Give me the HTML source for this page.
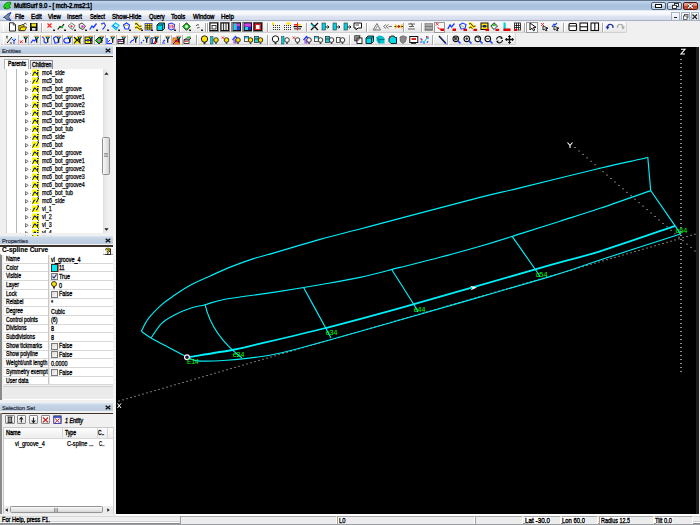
<!DOCTYPE html>
<html><head><meta charset="utf-8">
<style>
*{margin:0;padding:0;box-sizing:border-box}
html,body{width:700px;height:525px;overflow:hidden;background:#f0f0f0;font-family:"Liberation Sans",sans-serif;position:relative}
.a{position:absolute}
svg.a{overflow:visible}
.tx{position:absolute;white-space:pre;line-height:1;transform-origin:0 0;display:inline-block;-webkit-text-stroke:0.25px currentColor}
</style></head><body>
<div class="a" style="left:0.00px;top:0.00px;width:700.00px;height:11.00px;background:linear-gradient(#c2d6ec,#a9c1de 45%,#b2c8e3);border-top:1px solid #62758c"></div>
<div class="a" style="left:0.00px;top:10.00px;width:700.00px;height:1.00px;background:#dfe8f3"></div>
<svg class="a" style="left:2.00px;top:0.50px" width="10" height="9" viewBox="0 0 10 9"><path d="M1.5 6 L3 3 L5 1.5 L8.5 1 L9 3 L7 4.5 L8.5 6.5 L5 8 L3 7.5 Z" fill="#1ed21e" stroke="#0c6a0c" stroke-width="0.7"/><path d="M2 8 L4 6" stroke="#0c6a0c" stroke-width="0.8"/></svg>
<span class="tx" style="left:13.60px;top:2.22px;font-size:7.30px;transform:scaleX(0.813);color:#000;font-weight:normal;font-style:normal;-webkit-text-stroke:0.45px #000">MultiSurf 9.0 - [ mch-2.ms2:1]</span>
<div class="a" style="left:651.00px;top:1.50px;width:15.00px;height:8.00px;border:1px solid #4e5e72;border-radius:2px;background:linear-gradient(#eef4fa,#d4e0ee 45%,#b4c6dc 55%,#c4d4e8)"></div>
<div class="a" style="left:655.00px;top:4.20px;width:7.00px;height:3.40px;background:#fff;border:1px solid #111"></div>
<div class="a" style="left:667.00px;top:1.50px;width:15.00px;height:8.00px;border:1px solid #4e5e72;border-radius:2px;background:linear-gradient(#eef4fa,#d4e0ee 45%,#b4c6dc 55%,#c4d4e8)"></div>
<svg class="a" style="left:671.50px;top:2.50px" width="7" height="6" viewBox="0 0 7 6"><rect x="2.5" y="0.5" width="4" height="3" fill="#fff" stroke="#222" stroke-width="0.9"/><rect x="0.5" y="2.3" width="4" height="3.2" fill="#fff" stroke="#222" stroke-width="0.9"/></svg>
<div class="a" style="left:683.00px;top:1.50px;width:15.00px;height:8.00px;border:1px solid #4a1a12;border-radius:2px;background:linear-gradient(#f4b0a0,#e8806a 45%,#c83a20 55%,#d85030)"></div>
<svg class="a" style="left:687.00px;top:2.50px" width="7" height="6" viewBox="0 0 7 6"><path d="M1 0.8 L6 5.2 M6 0.8 L1 5.2" stroke="#222" stroke-width="2.2"/><path d="M1 0.8 L6 5.2 M6 0.8 L1 5.2" stroke="#fff" stroke-width="1.2"/></svg>
<div class="a" style="left:0.00px;top:11.00px;width:700.00px;height:10.00px;background:linear-gradient(#fbfcfe,#f2f5fa 35%,#dde3f0 55%,#d3daeb 92%)"></div>
<div class="a" style="left:0.00px;top:20.20px;width:700.00px;height:0.90px;background:#a8b1c2"></div>
<svg class="a" style="left:3.00px;top:11.50px" width="9" height="9" viewBox="0 0 9 9"><path d="M8 0.5 L4 2.5 L1.5 5 L0.5 5.5 L1.5 5.5 L4 7.5 L8 8.5 L5.5 5 Z" fill="#2ad42a" stroke="#2020c0" stroke-width="0.9"/><circle cx="4.8" cy="4" r="0.9" fill="#e040e0"/><circle cx="4.8" cy="6" r="0.9" fill="#e040e0"/></svg>
<span class="tx" style="left:15.00px;top:12.62px;font-size:7.30px;transform:scaleX(0.790);color:#000;font-weight:normal;font-style:normal;-webkit-text-stroke:0.4px #000">File</span>
<span class="tx" style="left:30.70px;top:12.62px;font-size:7.30px;transform:scaleX(0.851);color:#000;font-weight:normal;font-style:normal;-webkit-text-stroke:0.4px #000">Edit</span>
<span class="tx" style="left:47.90px;top:12.62px;font-size:7.30px;transform:scaleX(0.816);color:#000;font-weight:normal;font-style:normal;-webkit-text-stroke:0.4px #000">View</span>
<span class="tx" style="left:67.00px;top:12.62px;font-size:7.30px;transform:scaleX(0.822);color:#000;font-weight:normal;font-style:normal;-webkit-text-stroke:0.4px #000">Insert</span>
<span class="tx" style="left:90.00px;top:12.62px;font-size:7.30px;transform:scaleX(0.740);color:#000;font-weight:normal;font-style:normal;-webkit-text-stroke:0.4px #000">Select</span>
<span class="tx" style="left:112.00px;top:12.62px;font-size:7.30px;transform:scaleX(0.823);color:#000;font-weight:normal;font-style:normal;-webkit-text-stroke:0.4px #000">Show-Hide</span>
<span class="tx" style="left:148.60px;top:12.62px;font-size:7.30px;transform:scaleX(0.790);color:#000;font-weight:normal;font-style:normal;-webkit-text-stroke:0.4px #000">Query</span>
<span class="tx" style="left:171.40px;top:12.62px;font-size:7.30px;transform:scaleX(0.839);color:#000;font-weight:normal;font-style:normal;-webkit-text-stroke:0.4px #000">Tools</span>
<span class="tx" style="left:192.90px;top:12.62px;font-size:7.30px;transform:scaleX(0.825);color:#000;font-weight:normal;font-style:normal;-webkit-text-stroke:0.4px #000">Window</span>
<span class="tx" style="left:221.40px;top:12.62px;font-size:7.30px;transform:scaleX(0.859);color:#000;font-weight:normal;font-style:normal;-webkit-text-stroke:0.4px #000">Help</span>
<div class="a" style="left:671.30px;top:12.00px;width:8.50px;height:8.50px;border:1px solid #a7b4c4;background:linear-gradient(#fafbfd,#e2e8f1)"></div>
<div class="a" style="left:681.00px;top:12.00px;width:8.50px;height:8.50px;border:1px solid #a7b4c4;background:linear-gradient(#fafbfd,#e2e8f1)"></div>
<div class="a" style="left:690.60px;top:12.00px;width:8.50px;height:8.50px;border:1px solid #a7b4c4;background:linear-gradient(#fafbfd,#e2e8f1)"></div>
<div class="a" style="left:673.80px;top:17.00px;width:3.50px;height:1.30px;background:#222"></div>
<svg class="a" style="left:682.50px;top:13.50px" width="6" height="6" viewBox="0 0 6 6"><rect x="1.5" y="0.5" width="3.5" height="3" fill="none" stroke="#444" stroke-width="0.8"/><rect x="0.5" y="2" width="3.5" height="3.5" fill="#fff" stroke="#444" stroke-width="0.8"/></svg>
<svg class="a" style="left:692.30px;top:13.50px" width="6" height="6" viewBox="0 0 6 6"><path d="M0.5 0.5 L5 5 M5 0.5 L0.5 5" stroke="#222" stroke-width="1.2"/></svg>
<div class="a" style="left:0.00px;top:21.30px;width:700.00px;height:24.70px;background:#f0f0f0"></div>
<div class="a" style="left:1.00px;top:21.50px;width:626.00px;height:11.50px;background:linear-gradient(#fbfbfb,#f1f1f1 60%,#e6e6e6);border-right:1px solid #d6d6d6;border-bottom:1px solid #d0d0d0;border-radius:0 2px 2px 0"></div>
<div class="a" style="left:1.00px;top:33.30px;width:515.00px;height:12.20px;background:linear-gradient(#fbfbfb,#f1f1f1 60%,#e6e6e6);border-right:1px solid #d6d6d6;border-bottom:1px solid #d0d0d0;border-radius:0 2px 2px 0"></div>
<div class="a" style="left:2.50px;top:23.00px;width:1.00px;height:9.00px;background:#a0a0a0;border-right:1px solid #fff"></div>
<div class="a" style="left:2.50px;top:35.00px;width:1.00px;height:9.50px;background:#a0a0a0;border-right:1px solid #fff"></div>
<svg class="a" style="left:7.70px;top:22.30px" width="10" height="10" viewBox="0 0 10 10"><path d="M1.5 0.8 H5.5 L7.5 2.8 V9 H1.5 Z" fill="#fff" stroke="#111" stroke-width="0.9"/><path d="M5.3 0.8 V3 H7.5" fill="none" stroke="#111" stroke-width="0.7"/></svg>
<svg class="a" style="left:18.00px;top:22.30px" width="10" height="10" viewBox="0 0 10 10"><path d="M0.8 3.5 H3 L3.8 2.6 H6 V8.6 H0.8 Z" fill="#e8c800" stroke="#222" stroke-width="0.8"/><path d="M1.5 8.6 L3 5 H8.6 L7 8.6 Z" fill="#ffe600" stroke="#222" stroke-width="0.8"/><path d="M6 1.5 Q8 0.5 8.5 2.5" fill="none" stroke="#222" stroke-width="0.8"/></svg>
<svg class="a" style="left:29.00px;top:22.30px" width="10" height="10" viewBox="0 0 10 10"><rect x="1" y="1" width="7.5" height="8" fill="#111"/><rect x="2.5" y="1.5" width="4.5" height="3" fill="#f0e020"/><rect x="3" y="6" width="3.5" height="2.5" fill="#ddd"/></svg>
<div class="a" style="left:41.00px;top:23.00px;width:0.80px;height:9.00px;background:#a8a8a8;box-shadow:1px 0 0 #fff"></div>
<svg class="a" style="left:46.30px;top:22.30px" width="10" height="10" viewBox="0 0 10 10"><path d="M1.5 1.5 L5.5 5.5 M5.5 1.5 L1.5 5.5" stroke="#ff1a1a" stroke-width="1.1"/><path d="M7.2 7.4 L8.8 8.2 L7.8 9 Z" fill="#000"/><rect x="7.3" y="7.6" width="1.6" height="1.4" fill="#000"/></svg>
<svg class="a" style="left:56.60px;top:22.30px" width="10" height="10" viewBox="0 0 10 10"><path d="M0.8 7.5 L3 4.5 L4.5 5.5 L7 2" fill="none" stroke="#111" stroke-width="1.2"/><circle cx="5" cy="5" r="1.2" fill="#10c010"/><path d="M7.2 7.4 L8.8 8.2 L7.8 9 Z" fill="#000"/><rect x="7.3" y="7.6" width="1.6" height="1.4" fill="#000"/></svg>
<svg class="a" style="left:67.00px;top:22.30px" width="10" height="10" viewBox="0 0 10 10"><path d="M1 4 L4.5 1 L8 3.5 L5.5 7.5 Z" fill="#eef8f8" stroke="#555" stroke-width="0.8"/><circle cx="4.5" cy="4.3" r="1.1" fill="#ff2020"/><path d="M2 5 L4 7" stroke="#0cc" stroke-width="0.6"/><path d="M7.2 7.4 L8.8 8.2 L7.8 9 Z" fill="#000"/><rect x="7.3" y="7.6" width="1.6" height="1.4" fill="#000"/></svg>
<svg class="a" style="left:78.00px;top:22.30px" width="10" height="10" viewBox="0 0 10 10"><path d="M1 2.5 L4 1 L7.5 4 L5 7.5 L1.5 6 Z" fill="#f4f4f4" stroke="#333" stroke-width="0.9"/><circle cx="4.5" cy="4.5" r="1.2" fill="#e020e0"/><circle cx="3" cy="6" r="0.8" fill="#20c020"/><path d="M7.2 7.4 L8.8 8.2 L7.8 9 Z" fill="#000"/><rect x="7.3" y="7.6" width="1.6" height="1.4" fill="#000"/></svg>
<svg class="a" style="left:89.20px;top:22.30px" width="10" height="10" viewBox="0 0 10 10"><path d="M0.8 7.5 L3 4 L4.5 5.5 L7.5 1.5" fill="none" stroke="#1a3aff" stroke-width="1.3"/><path d="M7.2 7.4 L8.8 8.2 L7.8 9 Z" fill="#000"/><rect x="7.3" y="7.6" width="1.6" height="1.4" fill="#000"/></svg>
<svg class="a" style="left:99.50px;top:22.30px" width="10" height="10" viewBox="0 0 10 10"><path d="M1 2 L4 1 L5.5 3.5 L4 6 L2.5 7.5" fill="none" stroke="#1a3aff" stroke-width="1.1"/><path d="M1 3 L3 2" stroke="#ccaa00" stroke-width="0.7"/><path d="M7.2 7.4 L8.8 8.2 L7.8 9 Z" fill="#000"/><rect x="7.3" y="7.6" width="1.6" height="1.4" fill="#000"/></svg>
<svg class="a" style="left:110.60px;top:22.30px" width="10" height="10" viewBox="0 0 10 10"><path d="M1 4 L4.5 1 L8 3.5 L5 7.5 Z" fill="#bff" stroke="#00c8f0" stroke-width="1.2"/><path d="M2 3.5 L6 6" stroke="#1a3aff" stroke-width="0.9"/><path d="M7.2 7.4 L8.8 8.2 L7.8 9 Z" fill="#000"/><rect x="7.3" y="7.6" width="1.6" height="1.4" fill="#000"/></svg>
<svg class="a" style="left:121.90px;top:22.30px" width="10" height="10" viewBox="0 0 10 10"><path d="M1.5 3 L4.5 1 L7.5 3 L6.5 7 L3 7 Z" fill="#fff" stroke="#1a3aff" stroke-width="1.2"/><path d="M3 3.5 L6 3.5" stroke="#ccaa00" stroke-width="0.7"/><path d="M7.2 7.4 L8.8 8.2 L7.8 9 Z" fill="#000"/><rect x="7.3" y="7.6" width="1.6" height="1.4" fill="#000"/></svg>
<svg class="a" style="left:133.90px;top:22.30px" width="10" height="10" viewBox="0 0 10 10"><path d="M1 2 Q3 0.5 4 3 Q5 5.5 7.5 4 M1 6 Q3 4 4.5 6.5 Q6 8 7.5 6.5" fill="none" stroke="#ffe800" stroke-width="2.4"/><path d="M1 2 Q3 0.5 4 3 Q5 5.5 7.5 4 M1 6 Q3 4 4.5 6.5 Q6 8 7.5 6.5" fill="none" stroke="#111" stroke-width="0.8"/><circle cx="2" cy="2" r="0.6" fill="#2030d0"/><circle cx="7" cy="6.5" r="0.6" fill="#2030d0"/><path d="M7.2 7.4 L8.8 8.2 L7.8 9 Z" fill="#000"/><rect x="7.3" y="7.6" width="1.6" height="1.4" fill="#000"/></svg>
<svg class="a" style="left:144.00px;top:22.30px" width="10" height="10" viewBox="0 0 10 10"><rect x="1" y="1.5" width="7" height="6.5" fill="#ffee00" stroke="#3a40d0" stroke-width="0.8"/><path d="M3.3 1.5 V8 M5.7 1.5 V8 M1 3.7 H8 M1 5.9 H8" stroke="#111" stroke-width="0.7"/><path d="M7.2 7.4 L8.8 8.2 L7.8 9 Z" fill="#000"/><rect x="7.3" y="7.6" width="1.6" height="1.4" fill="#000"/></svg>
<svg class="a" style="left:156.00px;top:22.30px" width="10" height="10" viewBox="0 0 10 10"><path d="M1 3 L3 1 H8.5 V6.5 L6.5 8.5 H1 Z" fill="#00d8e8" stroke="#111" stroke-width="0.9"/><path d="M1 3 H6.5 V8.5 M6.5 3 L8.5 1" fill="none" stroke="#111" stroke-width="0.8"/></svg>
<svg class="a" style="left:166.50px;top:22.30px" width="10" height="10" viewBox="0 0 10 10"><path d="M1.5 2 L4.5 1 L7.5 2.5 L7 7 L4 8 L1.5 6.5 Z" fill="#fff0f8" stroke="#3040e0" stroke-width="1.1"/><path d="M3 3 L3 6 M4.5 3 Q6 3 6 4.5 Q6 6 4.5 6" fill="none" stroke="#e02020" stroke-width="0.9"/><rect x="4.5" y="3.5" width="1.5" height="1.5" fill="#e040e0"/><path d="M7.2 7.4 L8.8 8.2 L7.8 9 Z" fill="#000"/><rect x="7.3" y="7.6" width="1.6" height="1.4" fill="#000"/></svg>
<div class="a" style="left:178.80px;top:23.00px;width:0.80px;height:9.00px;background:#a8a8a8;box-shadow:1px 0 0 #fff"></div>
<svg class="a" style="left:182.00px;top:22.30px" width="10" height="10" viewBox="0 0 10 10"><path d="M4.5 0.8 L8.3 4.5 L4.5 8.3 L0.8 4.5 Z" fill="#10d010" stroke="#111" stroke-width="0.9"/><rect x="3.3" y="3.3" width="2.4" height="2.4" fill="#fff"/><path d="M7.2 7.4 L8.8 8.2 L7.8 9 Z" fill="#000"/><rect x="7.3" y="7.6" width="1.6" height="1.4" fill="#000"/></svg>
<svg class="a" style="left:194.00px;top:22.30px" width="10" height="10" viewBox="0 0 10 10"><path d="M2 4 Q3 2 5 3" fill="none" stroke="#333" stroke-width="0.9"/><path d="M3 6 L5.5 5.5" stroke="#333" stroke-width="0.8"/><path d="M7.2 7.4 L8.8 8.2 L7.8 9 Z" fill="#000"/><rect x="7.3" y="7.6" width="1.6" height="1.4" fill="#000"/></svg>
<div class="a" style="left:205.00px;top:23.00px;width:0.80px;height:9.00px;background:#a8a8a8;box-shadow:1px 0 0 #fff"></div>
<div class="a" style="left:207.00px;top:23.00px;width:0.80px;height:9.00px;background:#a8a8a8;box-shadow:1px 0 0 #fff"></div>
<div class="a" style="left:208.50px;top:22.00px;width:10.00px;height:10.00px;border:1px solid #888;background:#fff"></div>
<svg class="a" style="left:209.00px;top:22.30px" width="10" height="10" viewBox="0 0 10 10"><rect x="1" y="1" width="7.5" height="7.5" fill="#fff" stroke="#111" stroke-width="1"/><rect x="3" y="3.5" width="4" height="3.5" fill="none" stroke="#111" stroke-width="0.8"/></svg>
<div class="a" style="left:219.50px;top:22.00px;width:10.00px;height:10.00px;border:1px solid #888;background:#fff"></div>
<svg class="a" style="left:220.00px;top:22.30px" width="10" height="10" viewBox="0 0 10 10"><rect x="1" y="1" width="7.5" height="7.5" fill="#e8e8e8" stroke="#111" stroke-width="1"/><path d="M3.5 1 V8.5 M6 1 V8.5" stroke="#111" stroke-width="0.8"/></svg>
<div class="a" style="left:231.00px;top:22.00px;width:10.00px;height:10.00px;border:1px solid #888;background:#fff"></div>
<svg class="a" style="left:231.50px;top:22.30px" width="10" height="10" viewBox="0 0 10 10"><rect x="1" y="1" width="7.5" height="7.5" fill="#d040d0" stroke="#111" stroke-width="1"/><rect x="1.5" y="1.5" width="3" height="6.5" fill="#20d0e0"/><rect x="5" y="4" width="3" height="4" fill="#2040d0"/></svg>
<div class="a" style="left:242.00px;top:22.00px;width:10.00px;height:10.00px;border:1px solid #888;background:#fff"></div>
<svg class="a" style="left:242.50px;top:22.30px" width="10" height="10" viewBox="0 0 10 10"><rect x="1" y="1" width="7.5" height="7.5" fill="#2030c0" stroke="#111" stroke-width="1"/><rect x="1.5" y="1.5" width="6.5" height="3" fill="#e040e0"/><rect x="2" y="5" width="3" height="3" fill="#20d0e0"/></svg>
<div class="a" style="left:252.50px;top:22.00px;width:10.00px;height:10.00px;border:1px solid #888;background:#fff"></div>
<svg class="a" style="left:253.00px;top:22.30px" width="10" height="10" viewBox="0 0 10 10"><rect x="1" y="1" width="7.5" height="7.5" fill="#e02020" stroke="#111" stroke-width="1"/><rect x="3" y="3" width="3.5" height="4" fill="#fff"/></svg>
<div class="a" style="left:267.00px;top:23.00px;width:0.80px;height:9.00px;background:#a8a8a8;box-shadow:1px 0 0 #fff"></div>
<svg class="a" style="left:271.00px;top:22.30px" width="10" height="10" viewBox="0 0 10 10"><rect x="1" y="0.5" width="2" height="2.5" fill="#ffe000"/><rect x="2" y="3" width="1" height="1" fill="#333"/><rect x="2" y="5" width="1" height="1" fill="#333"/><rect x="2" y="7" width="1" height="1" fill="#333"/><rect x="4" y="3" width="1" height="1" fill="#333"/><rect x="4" y="5" width="1" height="1" fill="#333"/><rect x="4" y="7" width="1" height="1" fill="#333"/><rect x="6" y="3" width="1" height="1" fill="#333"/><rect x="6" y="5" width="1" height="1" fill="#333"/><rect x="6" y="7" width="1" height="1" fill="#333"/><rect x="8" y="3" width="1" height="1" fill="#333"/><rect x="8" y="5" width="1" height="1" fill="#333"/><rect x="8" y="7" width="1" height="1" fill="#333"/></svg>
<svg class="a" style="left:282.00px;top:22.30px" width="10" height="10" viewBox="0 0 10 10"><rect x="4.5" y="0.5" width="4" height="2" fill="#ffe000"/><rect x="2" y="3" width="1" height="1" fill="#333"/><rect x="2" y="5" width="1" height="1" fill="#333"/><rect x="2" y="7" width="1" height="1" fill="#333"/><rect x="4" y="3" width="1" height="1" fill="#333"/><rect x="4" y="5" width="1" height="1" fill="#333"/><rect x="4" y="7" width="1" height="1" fill="#333"/><rect x="6" y="3" width="1" height="1" fill="#333"/><rect x="6" y="5" width="1" height="1" fill="#333"/><rect x="6" y="7" width="1" height="1" fill="#333"/><rect x="8" y="3" width="1" height="1" fill="#333"/><rect x="8" y="5" width="1" height="1" fill="#333"/><rect x="8" y="7" width="1" height="1" fill="#333"/></svg>
<svg class="a" style="left:293.00px;top:22.30px" width="10" height="10" viewBox="0 0 10 10"><rect x="0.5" y="4" width="8.5" height="1.2" fill="#111"/><rect x="1" y="2" width="3" height="1.5" fill="#ff2020"/><rect x="5" y="2" width="3" height="1.5" fill="#ffe000"/><rect x="1" y="6" width="7" height="1.5" fill="#666"/><rect x="4" y="0.5" width="1" height="8" fill="#e02020"/></svg>
<div class="a" style="left:305.50px;top:23.00px;width:0.80px;height:9.00px;background:#a8a8a8;box-shadow:1px 0 0 #fff"></div>
<svg class="a" style="left:309.80px;top:22.30px" width="10" height="10" viewBox="0 0 10 10"><path d="M1 1 L8 8 M8 1 L1 8" stroke="#111" stroke-width="1.3"/><path d="M1 2 L4 5" stroke="#00c0e0" stroke-width="1.2"/></svg>
<svg class="a" style="left:321.00px;top:22.30px" width="10" height="10" viewBox="0 0 10 10"><rect x="1" y="1" width="3.5" height="7" fill="#00d0e0" stroke="#333" stroke-width="0.6"/><path d="M4.5 5 H8 M6.5 3.5 L8 5 L6.5 6.5" fill="none" stroke="#111" stroke-width="0.9"/></svg>
<svg class="a" style="left:332.00px;top:22.30px" width="10" height="10" viewBox="0 0 10 10"><rect x="1" y="1" width="3.5" height="7" fill="#00d0e0" stroke="#333" stroke-width="0.6"/><path d="M4.5 5 H8 M6.5 3.5 L8 5 L6.5 6.5" fill="none" stroke="#111" stroke-width="0.9"/></svg>
<svg class="a" style="left:343.00px;top:22.30px" width="10" height="10" viewBox="0 0 10 10"><rect x="1" y="1" width="3.5" height="7" fill="#00d0e0" stroke="#333" stroke-width="0.6"/><path d="M4.5 5 H8 M6.5 3.5 L8 5 L6.5 6.5" fill="none" stroke="#111" stroke-width="0.9"/></svg>
<svg class="a" style="left:352.70px;top:22.30px" width="10" height="10" viewBox="0 0 10 10"><path d="M1 1 H8.5 V6 H5 L3 8 V6 H1 Z" fill="#fff" stroke="#111" stroke-width="1"/><path d="M2.5 3 H6" stroke="#111" stroke-width="0.8"/></svg>
<div class="a" style="left:366.40px;top:23.00px;width:0.80px;height:9.00px;background:#a8a8a8;box-shadow:1px 0 0 #fff"></div>
<svg class="a" style="left:372.00px;top:22.30px" width="10" height="10" viewBox="0 0 10 10"><path d="M1 8 L5 1.5 L8.5 8 Z" fill="none" stroke="#777" stroke-width="1"/><path d="M3 8 L5.5 4" stroke="#777" stroke-width="0.8"/></svg>
<svg class="a" style="left:383.00px;top:22.30px" width="10" height="10" viewBox="0 0 10 10"><path d="M0.5 4.5 L3 2.5 M0.5 4.5 L3 6.5 M3 4.5 L5.5 2.5 M3 4.5 L5.5 6.5 M5.5 4.5 H9" stroke="#666" stroke-width="0.9" fill="none"/></svg>
<svg class="a" style="left:394.00px;top:22.30px" width="10" height="10" viewBox="0 0 10 10"><path d="M0.5 4.5 H9" stroke="#111" stroke-width="0.9"/><path d="M1 2.5 L3 4.5 L1 6.5 M8.5 2.5 L6.5 4.5 L8.5 6.5" stroke="#ffc000" stroke-width="1.1" fill="none"/><rect x="4" y="3" width="1.5" height="3" fill="#e02020"/></svg>
<div class="a" style="left:403.30px;top:23.00px;width:0.80px;height:9.00px;background:#a8a8a8;box-shadow:1px 0 0 #fff"></div>
<svg class="a" style="left:407.00px;top:22.30px" width="10" height="10" viewBox="0 0 10 10"><path d="M1 2 H8 M1 7 H8 M2 4.5 H7" stroke="#555" stroke-width="0.9"/><path d="M3 1 L6 3 L3 5" stroke="#555" stroke-width="0.8" fill="none"/></svg>
<div class="a" style="left:420.50px;top:23.00px;width:0.80px;height:9.00px;background:#a8a8a8;box-shadow:1px 0 0 #fff"></div>
<svg class="a" style="left:424.00px;top:22.30px" width="10" height="10" viewBox="0 0 10 10"><rect x="1" y="1.5" width="7.5" height="7" fill="#d8d8d8" stroke="#777" stroke-width="0.7"/><path d="M1 3 H8.5 M1 4.5 H8.5 M1 6 H8.5 M1 7.5 H8.5" stroke="#555" stroke-width="0.7"/></svg>
<div class="a" style="left:434.00px;top:22.00px;width:11.00px;height:11.00px;border:1px solid #9a9a9a;background:#f8f8f8"></div>
<svg class="a" style="left:435.00px;top:22.30px" width="10" height="10" viewBox="0 0 10 10"><path d="M1 1 L3.5 3.5 M3.5 1 L1 3.5" stroke="#ff1a1a" stroke-width="0.9"/><path d="M2.5 5 Q4 8 6 7" fill="none" stroke="#ff1a1a" stroke-width="1"/><rect x="5.5" y="6.5" width="3.5" height="2.5" fill="#e00000"/></svg>
<svg class="a" style="left:447.00px;top:22.30px" width="10" height="10" viewBox="0 0 10 10"><path d="M0.8 7 L3 3 L4.5 5 L7.5 1.5" fill="none" stroke="#1a3aff" stroke-width="1.3"/><rect x="5.5" y="6.5" width="3.5" height="2.5" fill="#e00000"/></svg>
<svg class="a" style="left:458.00px;top:22.30px" width="10" height="10" viewBox="0 0 10 10"><path d="M1.5 3 L4.5 1 L8 2.5 L7 6.5 L3 7 Z" fill="#e8f8ff" stroke="#1a3aff" stroke-width="1.1"/><path d="M3 3.5 L6 5" stroke="#ccaa00" stroke-width="0.8"/><rect x="5.5" y="6.8" width="3.5" height="2.2" fill="#e00000"/></svg>
<svg class="a" style="left:468.00px;top:22.30px" width="10" height="10" viewBox="0 0 10 10"><path d="M1 2 Q3 0.5 4 3 Q5 5.5 7.5 4 M1 6 Q3 4 4.5 6.5" fill="none" stroke="#ffe800" stroke-width="2.4"/><path d="M1 2 Q3 0.5 4 3 Q5 5.5 7.5 4 M1 6 Q3 4 4.5 6.5" fill="none" stroke="#111" stroke-width="0.8"/><rect x="5.5" y="6.8" width="3.5" height="2.2" fill="#e00000"/></svg>
<svg class="a" style="left:480.00px;top:22.30px" width="10" height="10" viewBox="0 0 10 10"><rect x="1" y="1" width="7" height="6.5" fill="#ffee00" stroke="#111" stroke-width="1"/><rect x="3" y="3" width="3" height="2.5" fill="#2030c0"/><path d="M1 4.2 H8" stroke="#111" stroke-width="0.7"/><rect x="5.5" y="6.8" width="3.5" height="2.2" fill="#e00000"/></svg>
<svg class="a" style="left:490.00px;top:22.30px" width="10" height="10" viewBox="0 0 10 10"><path d="M4 0.8 L7.5 4 L4 7.5 L0.8 4 Z" fill="#fff" stroke="#111" stroke-width="0.9"/><path d="M2.5 4 L4 2.5 L5.5 4" fill="none" stroke="#10c010" stroke-width="1.2"/><rect x="5.5" y="6.8" width="3.5" height="2.2" fill="#e00000"/></svg>
<svg class="a" style="left:502.00px;top:22.30px" width="10" height="10" viewBox="0 0 10 10"><rect x="1.5" y="0.5" width="2.2" height="8" fill="#00d0e0"/><rect x="1.5" y="6.5" width="7" height="2.5" fill="#e00000"/></svg>
<svg class="a" style="left:513.00px;top:22.30px" width="10" height="10" viewBox="0 0 10 10"><rect x="1.5" y="1" width="6" height="7" fill="#fff" stroke="#111" stroke-width="0.8"/><path d="M3.5 1 V8 M5.5 1 V8 M1.5 3.5 H7.5 M1.5 5.5 H7.5" stroke="#111" stroke-width="0.8"/><rect x="1" y="6.8" width="3" height="2.2" fill="#e00000"/></svg>
<div class="a" style="left:524.30px;top:23.00px;width:0.80px;height:9.00px;background:#a8a8a8;box-shadow:1px 0 0 #fff"></div>
<div class="a" style="left:526.00px;top:22.00px;width:11.50px;height:11.00px;border:1px solid #9a9a9a;background:#f8f8f8"></div>
<svg class="a" style="left:527.50px;top:22.30px" width="10" height="10" viewBox="0 0 10 10"><path d="M2 1 L2 8 L4 6.2 L5.5 8.8 L6.8 8 L5.3 5.5 L8 5.3 Z" fill="#fff" stroke="#111" stroke-width="1"/></svg>
<svg class="a" style="left:540.00px;top:22.30px" width="10" height="10" viewBox="0 0 10 10"><path d="M1 1 L4 4 M4 1 L1 4" stroke="#ff1a1a" stroke-width="0.9"/><path d="M3 4 L3 8 L4.5 7 L6 9 L7 8.3 L5.8 6.5 L8 6.3 Z" fill="#fff" stroke="#111" stroke-width="0.9"/></svg>
<svg class="a" style="left:551.00px;top:22.30px" width="10" height="10" viewBox="0 0 10 10"><path d="M1 5 L3 2 L4 3 L6 1" fill="none" stroke="#1a3aff" stroke-width="1.1"/><path d="M3 4 L3 8 L4.5 7 L6 9 L7 8.3 L5.8 6.5 L8 6.3 Z" fill="#fff" stroke="#111" stroke-width="0.9"/></svg>
<div class="a" style="left:563.00px;top:23.00px;width:0.80px;height:9.00px;background:#a8a8a8;box-shadow:1px 0 0 #fff"></div>
<svg class="a" style="left:568.00px;top:22.30px" width="10" height="10" viewBox="0 0 10 10"><rect x="1" y="1.5" width="7.5" height="7" rx="1" fill="#fff" stroke="#111" stroke-width="1.1"/><path d="M1 4 H8.5" stroke="#111" stroke-width="1"/></svg>
<svg class="a" style="left:579.00px;top:22.30px" width="10" height="10" viewBox="0 0 10 10"><rect x="1" y="1" width="7.5" height="7.5" fill="#fff" stroke="#111" stroke-width="1.1"/><path d="M1 4.8 H8.5" stroke="#111" stroke-width="1.1"/></svg>
<svg class="a" style="left:590.00px;top:22.30px" width="10" height="10" viewBox="0 0 10 10"><rect x="1" y="1" width="7.5" height="7.5" fill="#fff" stroke="#111" stroke-width="1.1"/><path d="M4.8 1 V8.5" stroke="#111" stroke-width="1.1"/></svg>
<div class="a" style="left:601.80px;top:23.00px;width:0.80px;height:9.00px;background:#a8a8a8;box-shadow:1px 0 0 #fff"></div>
<svg class="a" style="left:605.00px;top:22.30px" width="10" height="10" viewBox="0 0 10 10"><path d="M2.5 6.5 Q2 2 6 2.5 Q8.5 3 8 6" fill="none" stroke="#1a2aa0" stroke-width="1.2"/><path d="M0.5 4.5 L2.5 7.5 L4.5 4.8 Z" fill="#1a2aa0"/></svg>
<svg class="a" style="left:616.00px;top:22.30px" width="10" height="10" viewBox="0 0 10 10"><path d="M7 6.5 Q7.5 2 3.5 2.5 Q1 3 1.5 6" fill="none" stroke="#aaa" stroke-width="1.2"/><path d="M9 4.5 L7 7.5 L5 4.8 Z" fill="#aaa"/></svg>
<svg class="a" style="left:6.00px;top:34.80px" width="11" height="10" viewBox="0 0 11 10"><path d="M1 1 V3.5 M0.5 1.5 L1.3 1" stroke="#111" stroke-width="0.9"/><path d="M1 8 L6 2" stroke="#111" stroke-width="1"/><path d="M4 8 H6" stroke="#111" stroke-width="0.8"/><path d="M6 4 L8 6 L10 4 M8 6 V9" fill="none" stroke="#1a3aff" stroke-width="1"/><path d="M7.5 4 H9" stroke="#00c0e0" stroke-width="1"/></svg>
<div class="a" style="left:17.50px;top:34.50px;width:0.80px;height:10.50px;background:#b8b8b8"></div>
<svg class="a" style="left:18.50px;top:34.80px" width="10" height="10" viewBox="0 0 10 10"><path d="M1 5.5 L3.5 8 M3.5 5.5 L1 8" stroke="#ff1a1a" stroke-width="1"/><path d="M4.2 1.6 H9.2 L7.3 4.6 V7.8 H6.1 V4.6 Z" fill="#111"/><path d="M4.2 1.2 H9.2" stroke="#f0a050" stroke-width="1"/><circle cx="6.7" cy="2.6" r="0.9" fill="#00d0f0"/></svg>
<div class="a" style="left:28.30px;top:34.50px;width:0.80px;height:10.50px;background:#b8b8b8"></div>
<svg class="a" style="left:30.00px;top:34.80px" width="10" height="10" viewBox="0 0 10 10"><path d="M0.8 8 L3 5 L4.5 6 L7 3" fill="none" stroke="#1a3aff" stroke-width="1.2"/><path d="M4.2 1.6 H9.2 L7.3 4.6 V7.8 H6.1 V4.6 Z" fill="#111"/><path d="M4.2 1.2 H9.2" stroke="#f0a050" stroke-width="1"/><circle cx="6.7" cy="2.6" r="0.9" fill="#00d0f0"/></svg>
<div class="a" style="left:39.80px;top:34.50px;width:0.80px;height:10.50px;background:#b8b8b8"></div>
<svg class="a" style="left:41.00px;top:34.80px" width="10" height="10" viewBox="0 0 10 10"><path d="M1 2 Q4 3 3 6 Q3 8 6 8" fill="none" stroke="#1a3aff" stroke-width="1.1"/><path d="M1 2 L3 1" stroke="#ccaa00" stroke-width="0.8"/><path d="M4.2 1.6 H9.2 L7.3 4.6 V7.8 H6.1 V4.6 Z" fill="#111"/><path d="M4.2 1.2 H9.2" stroke="#f0a050" stroke-width="1"/><circle cx="6.7" cy="2.6" r="0.9" fill="#00d0f0"/></svg>
<div class="a" style="left:50.50px;top:34.50px;width:0.80px;height:10.50px;background:#b8b8b8"></div>
<svg class="a" style="left:51.50px;top:34.80px" width="10" height="10" viewBox="0 0 10 10"><path d="M1.5 3 L4 1.5 L6.5 3 L6 7.5 L3 8 Z" fill="#fff" stroke="#1a3aff" stroke-width="1.2"/><path d="M4.2 1.6 H9.2 L7.3 4.6 V7.8 H6.1 V4.6 Z" fill="#111"/><path d="M4.2 1.2 H9.2" stroke="#f0a050" stroke-width="1"/><circle cx="6.7" cy="2.6" r="0.9" fill="#00d0f0"/></svg>
<div class="a" style="left:61.50px;top:34.50px;width:0.80px;height:10.50px;background:#b8b8b8"></div>
<svg class="a" style="left:62.60px;top:34.80px" width="10" height="10" viewBox="0 0 10 10"><ellipse cx="4" cy="5.5" rx="3.2" ry="2.5" fill="none" stroke="#1a3aff" stroke-width="1.2"/><path d="M4.2 1.6 H9.2 L7.3 4.6 V7.8 H6.1 V4.6 Z" fill="#111"/><path d="M4.2 1.2 H9.2" stroke="#f0a050" stroke-width="1"/><circle cx="6.7" cy="2.6" r="0.9" fill="#00d0f0"/></svg>
<div class="a" style="left:72.00px;top:34.50px;width:0.80px;height:10.50px;background:#b8b8b8"></div>
<svg class="a" style="left:72.90px;top:34.80px" width="10" height="10" viewBox="0 0 10 10"><rect x="1" y="2" width="6.5" height="6.5" fill="#ffee00"/><path d="M1 2 L4 5 L1 8.5 M7.5 2 L4.5 5 L7.5 8.5" fill="none" stroke="#111" stroke-width="1.1"/><path d="M4.2 1.6 H9.2 L7.3 4.6 V7.8 H6.1 V4.6 Z" fill="#111"/><path d="M4.2 1.2 H9.2" stroke="#f0a050" stroke-width="1"/><circle cx="6.7" cy="2.6" r="0.9" fill="#00d0f0"/></svg>
<div class="a" style="left:83.00px;top:34.50px;width:0.80px;height:10.50px;background:#b8b8b8"></div>
<svg class="a" style="left:84.00px;top:34.80px" width="10" height="10" viewBox="0 0 10 10"><rect x="1" y="2" width="7" height="6.5" fill="#ffee00" stroke="#111" stroke-width="0.9"/><path d="M1 5.3 H8" stroke="#111" stroke-width="1.1"/><rect x="3" y="4" width="2" height="2.5" fill="#2040e0"/><path d="M4.2 1.6 H9.2 L7.3 4.6 V7.8 H6.1 V4.6 Z" fill="#111"/><path d="M4.2 1.2 H9.2" stroke="#f0a050" stroke-width="1"/><circle cx="6.7" cy="2.6" r="0.9" fill="#00d0f0"/></svg>
<div class="a" style="left:94.00px;top:34.50px;width:0.80px;height:10.50px;background:#b8b8b8"></div>
<svg class="a" style="left:95.00px;top:34.80px" width="10" height="10" viewBox="0 0 10 10"><path d="M4 2 L7.5 5.5 L4 9 L0.5 5.5 Z" fill="#10d010" stroke="#111" stroke-width="0.9"/><rect x="3" y="4.5" width="2" height="2" fill="#ff40ff"/><path d="M4.2 1.6 H9.2 L7.3 4.6 V7.8 H6.1 V4.6 Z" fill="#111"/><path d="M4.2 1.2 H9.2" stroke="#f0a050" stroke-width="1"/><circle cx="6.7" cy="2.6" r="0.9" fill="#00d0f0"/></svg>
<div class="a" style="left:105.00px;top:34.50px;width:0.80px;height:10.50px;background:#b8b8b8"></div>
<svg class="a" style="left:106.00px;top:34.80px" width="10" height="10" viewBox="0 0 10 10"><path d="M1 3 V8.5 H6" fill="none" stroke="#1a3aff" stroke-width="1.2"/><path d="M2 7 L4 5" stroke="#1a3aff" stroke-width="1"/><path d="M4.2 1.6 H9.2 L7.3 4.6 V7.8 H6.1 V4.6 Z" fill="#111"/><path d="M4.2 1.2 H9.2" stroke="#f0a050" stroke-width="1"/><circle cx="6.7" cy="2.6" r="0.9" fill="#00d0f0"/></svg>
<div class="a" style="left:115.50px;top:34.50px;width:0.80px;height:10.50px;background:#b8b8b8"></div>
<svg class="a" style="left:116.70px;top:34.80px" width="10" height="10" viewBox="0 0 10 10"><rect x="1" y="4.5" width="6" height="4" fill="#fff" stroke="#111" stroke-width="0.9"/><path d="M1 6.5 H7" stroke="#111" stroke-width="0.8"/><rect x="2" y="5" width="2" height="1.5" fill="#ff40ff"/><path d="M4.2 1.6 H9.2 L7.3 4.6 V7.8 H6.1 V4.6 Z" fill="#111"/><path d="M4.2 1.2 H9.2" stroke="#f0a050" stroke-width="1"/><circle cx="6.7" cy="2.6" r="0.9" fill="#00d0f0"/></svg>
<div class="a" style="left:127.00px;top:34.50px;width:0.80px;height:10.50px;background:#b8b8b8"></div>
<svg class="a" style="left:129.00px;top:34.80px" width="10" height="10" viewBox="0 0 10 10"><path d="M1 8 L3 5.5 H4 L5 4" fill="none" stroke="#1a3aff" stroke-width="1.2"/><path d="M4.2 1.6 H9.2 L7.3 4.6 V7.8 H6.1 V4.6 Z" fill="#111"/><path d="M4.2 1.2 H9.2" stroke="#f0a050" stroke-width="1"/><circle cx="6.7" cy="2.6" r="0.9" fill="#00d0f0"/></svg>
<div class="a" style="left:138.50px;top:34.50px;width:0.80px;height:10.50px;background:#b8b8b8"></div>
<svg class="a" style="left:140.00px;top:34.80px" width="10" height="10" viewBox="0 0 10 10"><path d="M1 8.5 L2 7 M3 6 L4 5" fill="none" stroke="#1a3aff" stroke-width="1.2"/><path d="M4.2 1.6 H9.2 L7.3 4.6 V7.8 H6.1 V4.6 Z" fill="#111"/><path d="M4.2 1.2 H9.2" stroke="#f0a050" stroke-width="1"/><circle cx="6.7" cy="2.6" r="0.9" fill="#00d0f0"/></svg>
<div class="a" style="left:149.00px;top:34.50px;width:0.80px;height:10.50px;background:#b8b8b8"></div>
<svg class="a" style="left:150.00px;top:34.80px" width="10" height="10" viewBox="0 0 10 10"><rect x="1" y="3" width="4.5" height="5.5" fill="#fff" stroke="#111" stroke-width="0.9"/><path d="M2.5 4 V9" stroke="#1a3aff" stroke-width="1.2"/><rect x="4" y="6.5" width="2" height="2" fill="#ff2020"/><path d="M4.2 1.6 H9.2 L7.3 4.6 V7.8 H6.1 V4.6 Z" fill="#111"/><path d="M4.2 1.2 H9.2" stroke="#f0a050" stroke-width="1"/><circle cx="6.7" cy="2.6" r="0.9" fill="#00d0f0"/></svg>
<div class="a" style="left:159.50px;top:34.50px;width:0.80px;height:10.50px;background:#b8b8b8"></div>
<svg class="a" style="left:160.50px;top:34.80px" width="10" height="10" viewBox="0 0 10 10"><path d="M1 8 H4 M2 6.5 L4 5" fill="none" stroke="#1a3aff" stroke-width="1.1"/><path d="M4.2 1.6 H9.2 L7.3 4.6 V7.8 H6.1 V4.6 Z" fill="#111"/><path d="M4.2 1.2 H9.2" stroke="#f0a050" stroke-width="1"/><circle cx="6.7" cy="2.6" r="0.9" fill="#00d0f0"/></svg>
<div class="a" style="left:171.00px;top:34.50px;width:0.80px;height:10.50px;background:#b8b8b8"></div>
<svg class="a" style="left:172.00px;top:34.80px" width="10" height="10" viewBox="0 0 10 10"><rect x="1" y="3" width="6.5" height="6" fill="#ffe000" stroke="#d02020" stroke-width="0.8"/><rect x="2.5" y="4.5" width="3.5" height="3" fill="#e02020"/><path d="M1 9 L7 3" stroke="#2020d0" stroke-width="0.9"/><path d="M4.2 1.6 H9.2 L7.3 4.6 V7.8 H6.1 V4.6 Z" fill="#111"/><path d="M4.2 1.2 H9.2" stroke="#f0a050" stroke-width="1"/><circle cx="6.7" cy="2.6" r="0.9" fill="#00d0f0"/></svg>
<div class="a" style="left:181.50px;top:34.50px;width:0.80px;height:10.50px;background:#b8b8b8"></div>
<svg class="a" style="left:182.50px;top:34.80px" width="10" height="10" viewBox="0 0 10 10"><path d="M1 5 L4 3 H8 L6 5 Z" fill="#fff" stroke="#111" stroke-width="0.8"/><rect x="1" y="5" width="5" height="3.5" fill="#fff" stroke="#111" stroke-width="0.8"/><path d="M1.5 6.5 H5" stroke="#e02020" stroke-width="0.8"/><path d="M4 2 H8" stroke="#10c010" stroke-width="1"/></svg>
<div class="a" style="left:195.80px;top:35.00px;width:0.80px;height:9.50px;background:#a8a8a8;box-shadow:1px 0 0 #fff"></div>
<svg class="a" style="left:199.50px;top:34.80px" width="10" height="10" viewBox="0 0 10 10"><circle cx="4.5" cy="4" r="3.2" fill="#ffe000" stroke="#111" stroke-width="0.9"/><rect x="3.5" y="7" width="2" height="2.2" fill="#333"/><path d="M0.5 9 H2" stroke="#ffe000" stroke-width="1"/></svg>
<svg class="a" style="left:210.00px;top:34.80px" width="10" height="10" viewBox="0 0 10 10"><rect x="0.5" y="1.5" width="2.5" height="7.5" fill="#00d0e0" stroke="#333" stroke-width="0.5"/><circle cx="6.0" cy="5" r="2.3" fill="#ffe000" stroke="#222" stroke-width="0.9"/><rect x="5.2" y="7.3" width="1.6" height="1.6" fill="#333"/></svg>
<svg class="a" style="left:221.00px;top:34.80px" width="10" height="10" viewBox="0 0 10 10"><path d="M0.8 1.5 L3 3.8 M3 1.5 L0.8 3.8" stroke="#ff1a1a" stroke-width="0.9"/><circle cx="5.5" cy="5" r="2.3" fill="#ffe000" stroke="#222" stroke-width="0.9"/><rect x="4.7" y="7.3" width="1.6" height="1.6" fill="#333"/></svg>
<svg class="a" style="left:232.00px;top:34.80px" width="10" height="10" viewBox="0 0 10 10"><path d="M0.5 5 L3.5 1.5 L6.5 5" fill="none" stroke="#1a3aff" stroke-width="1.3"/><rect x="1.5" y="4.5" width="3" height="4" fill="#e020e0"/><rect x="2" y="5.5" width="1.5" height="2" fill="#20d0e0"/><circle cx="6.0" cy="5" r="2.3" fill="#ffe000" stroke="#222" stroke-width="0.9"/><rect x="5.2" y="7.3" width="1.6" height="1.6" fill="#333"/></svg>
<svg class="a" style="left:243.50px;top:34.80px" width="10" height="10" viewBox="0 0 10 10"><rect x="0.5" y="1.5" width="4" height="5" fill="#fff" stroke="#333" stroke-width="0.8"/><rect x="1" y="2" width="3" height="1.5" fill="#20d0e0"/><circle cx="6.5" cy="5" r="2.3" fill="#ffe000" stroke="#222" stroke-width="0.9"/><rect x="5.7" y="7.3" width="1.6" height="1.6" fill="#333"/></svg>
<svg class="a" style="left:254.00px;top:34.80px" width="10" height="10" viewBox="0 0 10 10"><rect x="0.5" y="1.5" width="4" height="6" fill="#20d0e0" stroke="#333" stroke-width="0.8"/><path d="M0.5 4 H4.5" stroke="#333" stroke-width="0.8"/><circle cx="6.5" cy="5" r="2.3" fill="#ffe000" stroke="#222" stroke-width="0.9"/><rect x="5.7" y="7.3" width="1.6" height="1.6" fill="#333"/></svg>
<div class="a" style="left:267.00px;top:35.00px;width:0.80px;height:9.50px;background:#a8a8a8;box-shadow:1px 0 0 #fff"></div>
<svg class="a" style="left:271.00px;top:34.80px" width="10" height="10" viewBox="0 0 10 10"><circle cx="4.5" cy="4" r="3.2" fill="#fff" stroke="#111" stroke-width="1"/><rect x="3.5" y="7" width="2" height="2.2" fill="#333"/></svg>
<svg class="a" style="left:281.00px;top:34.80px" width="10" height="10" viewBox="0 0 10 10"><rect x="0.5" y="1.5" width="2.5" height="7.5" fill="#00d0e0" stroke="#333" stroke-width="0.5"/><circle cx="6.0" cy="5" r="2.3" fill="#fff" stroke="#222" stroke-width="0.9"/><rect x="5.2" y="7.3" width="1.6" height="1.6" fill="#333"/></svg>
<svg class="a" style="left:292.00px;top:34.80px" width="10" height="10" viewBox="0 0 10 10"><path d="M0.8 1.5 L3 3.8 M3 1.5 L0.8 3.8" stroke="#ff1a1a" stroke-width="0.9"/><circle cx="5.5" cy="5" r="2.3" fill="#fff" stroke="#222" stroke-width="0.9"/><rect x="4.7" y="7.3" width="1.6" height="1.6" fill="#333"/></svg>
<svg class="a" style="left:303.00px;top:34.80px" width="10" height="10" viewBox="0 0 10 10"><path d="M0.5 5 L3.5 1.5 L6.5 5" fill="none" stroke="#1a3aff" stroke-width="1.3"/><rect x="1.5" y="4.5" width="3" height="4" fill="#e020e0"/><rect x="2" y="5.5" width="1.5" height="2" fill="#20d0e0"/><circle cx="6.0" cy="5" r="2.3" fill="#fff" stroke="#222" stroke-width="0.9"/><rect x="5.2" y="7.3" width="1.6" height="1.6" fill="#333"/></svg>
<svg class="a" style="left:314.00px;top:34.80px" width="10" height="10" viewBox="0 0 10 10"><rect x="0.5" y="1.5" width="4" height="5" fill="#fff" stroke="#333" stroke-width="0.8"/><rect x="1" y="2" width="3" height="1.5" fill="#20d0e0"/><circle cx="6.5" cy="5" r="2.3" fill="#fff" stroke="#222" stroke-width="0.9"/><rect x="5.7" y="7.3" width="1.6" height="1.6" fill="#333"/></svg>
<svg class="a" style="left:325.00px;top:34.80px" width="10" height="10" viewBox="0 0 10 10"><rect x="0.5" y="1.5" width="4" height="6" fill="#20d0e0" stroke="#333" stroke-width="0.8"/><path d="M0.5 4 H4.5" stroke="#333" stroke-width="0.8"/><circle cx="6.5" cy="5" r="2.3" fill="#fff" stroke="#222" stroke-width="0.9"/><rect x="5.7" y="7.3" width="1.6" height="1.6" fill="#333"/></svg>
<svg class="a" style="left:336.00px;top:34.80px" width="10" height="10" viewBox="0 0 10 10"><rect x="0.5" y="2.5" width="3.5" height="5" fill="#fff" stroke="#333" stroke-width="0.8"/><circle cx="6.5" cy="5" r="2.3" fill="#fff" stroke="#222" stroke-width="0.9"/><rect x="5.7" y="7.3" width="1.6" height="1.6" fill="#333"/></svg>
<div class="a" style="left:349.30px;top:35.00px;width:0.80px;height:9.50px;background:#a8a8a8;box-shadow:1px 0 0 #fff"></div>
<svg class="a" style="left:354.00px;top:34.80px" width="10" height="10" viewBox="0 0 10 10"><rect x="0.8" y="0.8" width="5" height="5" fill="#fff" stroke="#111" stroke-width="0.9"/><rect x="3" y="3" width="5" height="5.5" fill="#fff" stroke="#111" stroke-width="0.9"/><rect x="2" y="2" width="3" height="3" fill="none" stroke="#111" stroke-width="0.6"/></svg>
<svg class="a" style="left:365.00px;top:34.80px" width="10" height="10" viewBox="0 0 10 10"><path d="M1 3 L3 1 H8.5 V6.5 L6.5 8.5 H1 Z" fill="#00d8e8" stroke="#111" stroke-width="0.9"/><path d="M1 3 H6.5 V8.5 M6.5 3 L8.5 1" fill="none" stroke="#111" stroke-width="0.8"/></svg>
<svg class="a" style="left:376.00px;top:34.80px" width="10" height="10" viewBox="0 0 10 10"><path d="M0.5 2.5 L2.5 0.5 L6 1 L8.5 3 V8.5 H3 L0.5 6 Z" fill="#00c0d0"/><path d="M0.5 2.5 L3 4.5 H8.5 M3 4.5 V8.5" fill="none" stroke="#006070" stroke-width="0.8"/></svg>
<svg class="a" style="left:388.00px;top:34.80px" width="10" height="10" viewBox="0 0 10 10"><path d="M1 3 L3 1 H6 L7 2.5 H8.5 V8.5 H3 L1 6.5 Z" fill="#00d8e8" stroke="#111" stroke-width="0.9"/><circle cx="2" cy="2" r="1" fill="#e02020"/></svg>
<svg class="a" style="left:399.00px;top:34.80px" width="10" height="10" viewBox="0 0 10 10"><path d="M1 2 L4 0.8 L7.5 2 L6.5 6.5 L4 8.5 L1.5 6.5 Z" fill="#8a8a8a" stroke="#555" stroke-width="0.7"/></svg>
<svg class="a" style="left:409.00px;top:34.80px" width="10" height="10" viewBox="0 0 10 10"><rect x="0.8" y="1.5" width="8" height="6" fill="#fff" stroke="#111" stroke-width="1"/><rect x="2.5" y="3" width="4.5" height="2" fill="#e02020"/><path d="M2 8.5 H7" stroke="#111" stroke-width="0.8"/></svg>
<svg class="a" style="left:420.00px;top:34.80px" width="10" height="10" viewBox="0 0 10 10"><path d="M1 8 L1 6 M1 4.5 L1 3 M3 8 H5 M7 8 L8 6 M8 4 L8 1.5" stroke="#1a3aff" stroke-width="1"/><path d="M2 7 Q6 7 7 2" fill="none" stroke="#00d0e0" stroke-width="1.2"/><rect x="6" y="1" width="1.5" height="1.5" fill="#e02020"/><rect x="1" y="4" width="1.5" height="1.5" fill="#e02020"/></svg>
<div class="a" style="left:431.60px;top:35.00px;width:0.80px;height:9.50px;background:#a8a8a8;box-shadow:1px 0 0 #fff"></div>
<svg class="a" style="left:437.50px;top:34.80px" width="10" height="10" viewBox="0 0 10 10"><path d="M1 1 L7.5 8 " stroke="#111" stroke-width="1.6"/><path d="M2 2 L7 7.5" stroke="#1a3aff" stroke-width="0.7"/><path d="M6 7.5 L8.5 9" stroke="#1a3aff" stroke-width="1"/></svg>
<div class="a" style="left:447.00px;top:35.00px;width:0.80px;height:9.50px;background:#a8a8a8;box-shadow:1px 0 0 #fff"></div>
<svg class="a" style="left:451.50px;top:34.80px" width="10" height="10" viewBox="0 0 10 10"><circle cx="3.8" cy="3.8" r="2.8" fill="#fff" stroke="#111" stroke-width="1.1"/><path d="M5.8 5.8 L8.5 8.5" stroke="#1a3aff" stroke-width="1.6"/><path d="M2.3 3.8 H5.3 M3.8 2.3 V5.3" stroke="#111" stroke-width="0.8"/><rect x="2.6" y="2.6" width="2.4" height="2.4" fill="none" stroke="#111" stroke-width="0.5"/></svg>
<svg class="a" style="left:462.50px;top:34.80px" width="10" height="10" viewBox="0 0 10 10"><circle cx="3.8" cy="3.8" r="2.8" fill="#fff" stroke="#111" stroke-width="1.1"/><path d="M5.8 5.8 L8.5 8.5" stroke="#1a3aff" stroke-width="1.6"/><path d="M2.3 3.8 H5.3 M3.8 2.3 V5.3" stroke="#111" stroke-width="0.9"/></svg>
<svg class="a" style="left:473.50px;top:34.80px" width="10" height="10" viewBox="0 0 10 10"><circle cx="3.8" cy="3.8" r="2.8" fill="#fff" stroke="#111" stroke-width="1.1"/><path d="M5.8 5.8 L8.5 8.5" stroke="#1a3aff" stroke-width="1.6"/><path d="M2.5 2.5 H5 V5" fill="none" stroke="#111" stroke-width="0.7"/></svg>
<svg class="a" style="left:484.00px;top:34.80px" width="10" height="10" viewBox="0 0 10 10"><circle cx="3.8" cy="3.8" r="2.8" fill="#fff" stroke="#111" stroke-width="1.1"/><path d="M5.8 5.8 L8.5 8.5" stroke="#1a3aff" stroke-width="1.6"/><path d="M2.3 3.8 H5.3" stroke="#111" stroke-width="0.9"/></svg>
<svg class="a" style="left:494.50px;top:34.80px" width="10" height="10" viewBox="0 0 10 10"><path d="M1.5 4.5 A3 3 0 0 1 7 3" fill="none" stroke="#111" stroke-width="1.2"/><path d="M7.5 5 A3 3 0 0 1 2 6.5" fill="none" stroke="#111" stroke-width="1.2"/><path d="M6 1.5 L8 3.5 L5.5 4 Z M3 8 L1 6 L3.5 5.5 Z" fill="#111"/></svg>
<svg class="a" style="left:505.00px;top:34.80px" width="10" height="10" viewBox="0 0 10 10"><path d="M4.5 0.5 V8.5 M0.5 4.5 H8.5" stroke="#111" stroke-width="1.3"/><path d="M3 2 L4.5 0.5 L6 2 M3 7 L4.5 8.5 L6 7 M2 3 L0.5 4.5 L2 6 M7 3 L8.5 4.5 L7 6" fill="none" stroke="#111" stroke-width="0.9"/></svg>
<div class="a" style="left:0.00px;top:46.00px;width:116.00px;height:468.00px;background:#f0f0f0"></div>
<div class="a" style="left:113.00px;top:46.00px;width:3.00px;height:468.00px;background:#f4f4f4"></div>
<div class="a" style="left:0.00px;top:46.20px;width:113.00px;height:8.20px;background:linear-gradient(#dde7f2,#c6d5e6 25%,#bccbde)"></div>
<span class="tx" style="left:2.00px;top:47.75px;font-size:6.20px;transform:scaleX(0.936);color:#1c2838;font-weight:normal;font-style:normal;-webkit-text-stroke:0.2px #1c2838">Entities</span>
<svg class="a" style="left:104.50px;top:48.00px" width="6" height="5" viewBox="0 0 6 5"><path d="M0.7 0.7 L5.3 4.3 M5.3 0.7 L0.7 4.3" stroke="#111" stroke-width="1.4"/></svg>
<div class="a" style="left:0.00px;top:55.60px;width:113.00px;height:1.20px;background:#3b332c"></div>
<div class="a" style="left:3.50px;top:58.50px;width:25.50px;height:10.50px;background:#fff;border:1px solid #b4b4b4;border-bottom:none"></div>
<span class="tx" style="left:7.50px;top:59.77px;font-size:7.00px;transform:scaleX(0.746);color:#000;font-weight:normal;font-style:normal;-webkit-text-stroke:0.4px #000">Parents</span>
<div class="a" style="left:29.50px;top:59.50px;width:23.00px;height:9.00px;background:linear-gradient(#f6f6f6,#e0e0e8);border:1px solid #8c8ca0;border-bottom:none"></div>
<span class="tx" style="left:31.50px;top:60.67px;font-size:7.00px;transform:scaleX(0.748);color:#000;font-weight:normal;font-style:normal;-webkit-text-stroke:0.4px #000">Children</span>
<div class="a" style="left:6.00px;top:68.50px;width:97.00px;height:164.50px;background:#fff"></div>
<div class="a" style="left:6.00px;top:68.50px;width:1.00px;height:164.50px;background:#d4d4d4"></div>
<div class="a" style="left:16.00px;top:68.50px;width:1.00px;height:164.50px;background:#b8b8b8"></div>
<svg class="a" style="left:24.60px;top:70.60px" width="4" height="5" viewBox="0 0 4 5"><path d="M0.5 0.5 L3.2 2.3 L0.5 4.1 Z" fill="#fff" stroke="#555" stroke-width="0.8"/></svg>
<div class="a" style="left:30.00px;top:73.00px;width:1.00px;height:1.00px;background:#9aa"></div>
<svg class="a" style="left:31.80px;top:68.70px" width="7.5" height="8" viewBox="0 0 7.5 8"><rect x="0" y="0.5" width="7" height="6.5" fill="#ffff10"/><path d="M0.6 6.8 L2.3 3.2 L3.2 2.8 L4.6 5.2 L5.8 3 L5.6 6.5 L6.8 7.5" fill="none" stroke="#000" stroke-width="0.95"/><circle cx="2.4" cy="3.6" r="0.75" fill="#1020c0"/><circle cx="5.7" cy="3.8" r="0.7" fill="#1020c0"/><path d="M5.2 1.6 L6.6 1.4" stroke="#000" stroke-width="1"/></svg>
<span class="tx" style="left:42.00px;top:70.24px;font-size:6.80px;transform:scaleX(0.785);color:#000;font-weight:normal;font-style:normal;">mc4_side</span>
<svg class="a" style="left:24.60px;top:78.60px" width="4" height="5" viewBox="0 0 4 5"><path d="M0.5 0.5 L3.2 2.3 L0.5 4.1 Z" fill="#fff" stroke="#555" stroke-width="0.8"/></svg>
<div class="a" style="left:30.00px;top:81.00px;width:1.00px;height:1.00px;background:#9aa"></div>
<svg class="a" style="left:31.80px;top:76.70px" width="7.5" height="8" viewBox="0 0 7.5 8"><rect x="0" y="0.5" width="7" height="6.5" fill="#ffff10"/><path d="M0.6 6.5 L2.2 3.5 L3.3 2.8 M4.5 4.6 L5.8 3 L6 1.6 L7 1.4" fill="none" stroke="#000" stroke-width="0.95"/><circle cx="2.3" cy="3.5" r="0.8" fill="#1020c0"/><circle cx="4.8" cy="4.8" r="0.8" fill="#1020c0"/><circle cx="6" cy="0.4" r="0.6" fill="#1020c0"/></svg>
<span class="tx" style="left:42.00px;top:78.24px;font-size:6.80px;transform:scaleX(0.785);color:#000;font-weight:normal;font-style:normal;">mc5_bot</span>
<svg class="a" style="left:24.60px;top:86.60px" width="4" height="5" viewBox="0 0 4 5"><path d="M0.5 0.5 L3.2 2.3 L0.5 4.1 Z" fill="#fff" stroke="#555" stroke-width="0.8"/></svg>
<div class="a" style="left:30.00px;top:89.00px;width:1.00px;height:1.00px;background:#9aa"></div>
<svg class="a" style="left:31.80px;top:84.70px" width="7.5" height="8" viewBox="0 0 7.5 8"><rect x="0" y="0.5" width="7" height="6.5" fill="#ffff10"/><path d="M0.6 6.8 L2.3 3.2 L3.2 2.8 L4.6 5.2 L5.8 3 L5.6 6.5 L6.8 7.5" fill="none" stroke="#000" stroke-width="0.95"/><circle cx="2.4" cy="3.6" r="0.75" fill="#1020c0"/><circle cx="5.7" cy="3.8" r="0.7" fill="#1020c0"/><path d="M5.2 1.6 L6.6 1.4" stroke="#000" stroke-width="1"/></svg>
<span class="tx" style="left:42.00px;top:86.24px;font-size:6.80px;transform:scaleX(0.785);color:#000;font-weight:normal;font-style:normal;">mc5_bot_groove</span>
<svg class="a" style="left:24.60px;top:94.60px" width="4" height="5" viewBox="0 0 4 5"><path d="M0.5 0.5 L3.2 2.3 L0.5 4.1 Z" fill="#fff" stroke="#555" stroke-width="0.8"/></svg>
<div class="a" style="left:30.00px;top:97.00px;width:1.00px;height:1.00px;background:#9aa"></div>
<svg class="a" style="left:31.80px;top:92.70px" width="7.5" height="8" viewBox="0 0 7.5 8"><rect x="0" y="0.5" width="7" height="6.5" fill="#ffff10"/><path d="M0.6 6.8 L2.3 3.2 L3.2 2.8 L4.6 5.2 L5.8 3 L5.6 6.5 L6.8 7.5" fill="none" stroke="#000" stroke-width="0.95"/><circle cx="2.4" cy="3.6" r="0.75" fill="#1020c0"/><circle cx="5.7" cy="3.8" r="0.7" fill="#1020c0"/><path d="M5.2 1.6 L6.6 1.4" stroke="#000" stroke-width="1"/></svg>
<span class="tx" style="left:42.00px;top:94.24px;font-size:6.80px;transform:scaleX(0.785);color:#000;font-weight:normal;font-style:normal;">mc5_bot_groove1</span>
<svg class="a" style="left:24.60px;top:102.60px" width="4" height="5" viewBox="0 0 4 5"><path d="M0.5 0.5 L3.2 2.3 L0.5 4.1 Z" fill="#fff" stroke="#555" stroke-width="0.8"/></svg>
<div class="a" style="left:30.00px;top:105.00px;width:1.00px;height:1.00px;background:#9aa"></div>
<svg class="a" style="left:31.80px;top:100.70px" width="7.5" height="8" viewBox="0 0 7.5 8"><rect x="0" y="0.5" width="7" height="6.5" fill="#ffff10"/><path d="M0.6 6.8 L2.3 3.2 L3.2 2.8 L4.6 5.2 L5.8 3 L5.6 6.5 L6.8 7.5" fill="none" stroke="#000" stroke-width="0.95"/><circle cx="2.4" cy="3.6" r="0.75" fill="#1020c0"/><circle cx="5.7" cy="3.8" r="0.7" fill="#1020c0"/><path d="M5.2 1.6 L6.6 1.4" stroke="#000" stroke-width="1"/></svg>
<span class="tx" style="left:42.00px;top:102.24px;font-size:6.80px;transform:scaleX(0.785);color:#000;font-weight:normal;font-style:normal;">mc5_bot_groove2</span>
<svg class="a" style="left:24.60px;top:110.60px" width="4" height="5" viewBox="0 0 4 5"><path d="M0.5 0.5 L3.2 2.3 L0.5 4.1 Z" fill="#fff" stroke="#555" stroke-width="0.8"/></svg>
<div class="a" style="left:30.00px;top:113.00px;width:1.00px;height:1.00px;background:#9aa"></div>
<svg class="a" style="left:31.80px;top:108.70px" width="7.5" height="8" viewBox="0 0 7.5 8"><rect x="0" y="0.5" width="7" height="6.5" fill="#ffff10"/><path d="M0.6 6.8 L2.3 3.2 L3.2 2.8 L4.6 5.2 L5.8 3 L5.6 6.5 L6.8 7.5" fill="none" stroke="#000" stroke-width="0.95"/><circle cx="2.4" cy="3.6" r="0.75" fill="#1020c0"/><circle cx="5.7" cy="3.8" r="0.7" fill="#1020c0"/><path d="M5.2 1.6 L6.6 1.4" stroke="#000" stroke-width="1"/></svg>
<span class="tx" style="left:42.00px;top:110.24px;font-size:6.80px;transform:scaleX(0.785);color:#000;font-weight:normal;font-style:normal;">mc5_bot_groove3</span>
<svg class="a" style="left:24.60px;top:118.60px" width="4" height="5" viewBox="0 0 4 5"><path d="M0.5 0.5 L3.2 2.3 L0.5 4.1 Z" fill="#fff" stroke="#555" stroke-width="0.8"/></svg>
<div class="a" style="left:30.00px;top:121.00px;width:1.00px;height:1.00px;background:#9aa"></div>
<svg class="a" style="left:31.80px;top:116.70px" width="7.5" height="8" viewBox="0 0 7.5 8"><rect x="0" y="0.5" width="7" height="6.5" fill="#ffff10"/><path d="M0.6 6.8 L2.3 3.2 L3.2 2.8 L4.6 5.2 L5.8 3 L5.6 6.5 L6.8 7.5" fill="none" stroke="#000" stroke-width="0.95"/><circle cx="2.4" cy="3.6" r="0.75" fill="#1020c0"/><circle cx="5.7" cy="3.8" r="0.7" fill="#1020c0"/><path d="M5.2 1.6 L6.6 1.4" stroke="#000" stroke-width="1"/></svg>
<span class="tx" style="left:42.00px;top:118.24px;font-size:6.80px;transform:scaleX(0.785);color:#000;font-weight:normal;font-style:normal;">mc5_bot_groove4</span>
<svg class="a" style="left:24.60px;top:126.60px" width="4" height="5" viewBox="0 0 4 5"><path d="M0.5 0.5 L3.2 2.3 L0.5 4.1 Z" fill="#fff" stroke="#555" stroke-width="0.8"/></svg>
<div class="a" style="left:30.00px;top:129.00px;width:1.00px;height:1.00px;background:#9aa"></div>
<svg class="a" style="left:31.80px;top:124.70px" width="7.5" height="8" viewBox="0 0 7.5 8"><rect x="0" y="0.5" width="7" height="6.5" fill="#ffff10"/><path d="M0.6 6.8 L2.3 3.2 L3.2 2.8 L4.6 5.2 L5.8 3 L5.6 6.5 L6.8 7.5" fill="none" stroke="#000" stroke-width="0.95"/><circle cx="2.4" cy="3.6" r="0.75" fill="#1020c0"/><circle cx="5.7" cy="3.8" r="0.7" fill="#1020c0"/><path d="M5.2 1.6 L6.6 1.4" stroke="#000" stroke-width="1"/></svg>
<span class="tx" style="left:42.00px;top:126.24px;font-size:6.80px;transform:scaleX(0.785);color:#000;font-weight:normal;font-style:normal;">mc5_bot_tub</span>
<svg class="a" style="left:24.60px;top:134.60px" width="4" height="5" viewBox="0 0 4 5"><path d="M0.5 0.5 L3.2 2.3 L0.5 4.1 Z" fill="#fff" stroke="#555" stroke-width="0.8"/></svg>
<div class="a" style="left:30.00px;top:137.00px;width:1.00px;height:1.00px;background:#9aa"></div>
<svg class="a" style="left:31.80px;top:132.70px" width="7.5" height="8" viewBox="0 0 7.5 8"><rect x="0" y="0.5" width="7" height="6.5" fill="#ffff10"/><path d="M0.6 6.8 L2.3 3.2 L3.2 2.8 L4.6 5.2 L5.8 3 L5.6 6.5 L6.8 7.5" fill="none" stroke="#000" stroke-width="0.95"/><circle cx="2.4" cy="3.6" r="0.75" fill="#1020c0"/><circle cx="5.7" cy="3.8" r="0.7" fill="#1020c0"/><path d="M5.2 1.6 L6.6 1.4" stroke="#000" stroke-width="1"/></svg>
<span class="tx" style="left:42.00px;top:134.24px;font-size:6.80px;transform:scaleX(0.785);color:#000;font-weight:normal;font-style:normal;">mc5_side</span>
<svg class="a" style="left:24.60px;top:142.60px" width="4" height="5" viewBox="0 0 4 5"><path d="M0.5 0.5 L3.2 2.3 L0.5 4.1 Z" fill="#fff" stroke="#555" stroke-width="0.8"/></svg>
<div class="a" style="left:30.00px;top:145.00px;width:1.00px;height:1.00px;background:#9aa"></div>
<svg class="a" style="left:31.80px;top:140.70px" width="7.5" height="8" viewBox="0 0 7.5 8"><rect x="0" y="0.5" width="7" height="6.5" fill="#ffff10"/><path d="M0.6 6.5 L2.2 3.5 L3.3 2.8 M4.5 4.6 L5.8 3 L6 1.6 L7 1.4" fill="none" stroke="#000" stroke-width="0.95"/><circle cx="2.3" cy="3.5" r="0.8" fill="#1020c0"/><circle cx="4.8" cy="4.8" r="0.8" fill="#1020c0"/><circle cx="6" cy="0.4" r="0.6" fill="#1020c0"/></svg>
<span class="tx" style="left:42.00px;top:142.24px;font-size:6.80px;transform:scaleX(0.785);color:#000;font-weight:normal;font-style:normal;">mc6_bot</span>
<svg class="a" style="left:24.60px;top:150.60px" width="4" height="5" viewBox="0 0 4 5"><path d="M0.5 0.5 L3.2 2.3 L0.5 4.1 Z" fill="#fff" stroke="#555" stroke-width="0.8"/></svg>
<div class="a" style="left:30.00px;top:153.00px;width:1.00px;height:1.00px;background:#9aa"></div>
<svg class="a" style="left:31.80px;top:148.70px" width="7.5" height="8" viewBox="0 0 7.5 8"><rect x="0" y="0.5" width="7" height="6.5" fill="#ffff10"/><path d="M0.6 6.8 L2.3 3.2 L3.2 2.8 L4.6 5.2 L5.8 3 L5.6 6.5 L6.8 7.5" fill="none" stroke="#000" stroke-width="0.95"/><circle cx="2.4" cy="3.6" r="0.75" fill="#1020c0"/><circle cx="5.7" cy="3.8" r="0.7" fill="#1020c0"/><path d="M5.2 1.6 L6.6 1.4" stroke="#000" stroke-width="1"/></svg>
<span class="tx" style="left:42.00px;top:150.24px;font-size:6.80px;transform:scaleX(0.785);color:#000;font-weight:normal;font-style:normal;">mc6_bot_groove</span>
<svg class="a" style="left:24.60px;top:158.60px" width="4" height="5" viewBox="0 0 4 5"><path d="M0.5 0.5 L3.2 2.3 L0.5 4.1 Z" fill="#fff" stroke="#555" stroke-width="0.8"/></svg>
<div class="a" style="left:30.00px;top:161.00px;width:1.00px;height:1.00px;background:#9aa"></div>
<svg class="a" style="left:31.80px;top:156.70px" width="7.5" height="8" viewBox="0 0 7.5 8"><rect x="0" y="0.5" width="7" height="6.5" fill="#ffff10"/><path d="M0.6 6.8 L2.3 3.2 L3.2 2.8 L4.6 5.2 L5.8 3 L5.6 6.5 L6.8 7.5" fill="none" stroke="#000" stroke-width="0.95"/><circle cx="2.4" cy="3.6" r="0.75" fill="#1020c0"/><circle cx="5.7" cy="3.8" r="0.7" fill="#1020c0"/><path d="M5.2 1.6 L6.6 1.4" stroke="#000" stroke-width="1"/></svg>
<span class="tx" style="left:42.00px;top:158.24px;font-size:6.80px;transform:scaleX(0.785);color:#000;font-weight:normal;font-style:normal;">mc6_bot_groove1</span>
<svg class="a" style="left:24.60px;top:166.60px" width="4" height="5" viewBox="0 0 4 5"><path d="M0.5 0.5 L3.2 2.3 L0.5 4.1 Z" fill="#fff" stroke="#555" stroke-width="0.8"/></svg>
<div class="a" style="left:30.00px;top:169.00px;width:1.00px;height:1.00px;background:#9aa"></div>
<svg class="a" style="left:31.80px;top:164.70px" width="7.5" height="8" viewBox="0 0 7.5 8"><rect x="0" y="0.5" width="7" height="6.5" fill="#ffff10"/><path d="M0.6 6.8 L2.3 3.2 L3.2 2.8 L4.6 5.2 L5.8 3 L5.6 6.5 L6.8 7.5" fill="none" stroke="#000" stroke-width="0.95"/><circle cx="2.4" cy="3.6" r="0.75" fill="#1020c0"/><circle cx="5.7" cy="3.8" r="0.7" fill="#1020c0"/><path d="M5.2 1.6 L6.6 1.4" stroke="#000" stroke-width="1"/></svg>
<span class="tx" style="left:42.00px;top:166.24px;font-size:6.80px;transform:scaleX(0.785);color:#000;font-weight:normal;font-style:normal;">mc6_bot_groove2</span>
<svg class="a" style="left:24.60px;top:174.60px" width="4" height="5" viewBox="0 0 4 5"><path d="M0.5 0.5 L3.2 2.3 L0.5 4.1 Z" fill="#fff" stroke="#555" stroke-width="0.8"/></svg>
<div class="a" style="left:30.00px;top:177.00px;width:1.00px;height:1.00px;background:#9aa"></div>
<svg class="a" style="left:31.80px;top:172.70px" width="7.5" height="8" viewBox="0 0 7.5 8"><rect x="0" y="0.5" width="7" height="6.5" fill="#ffff10"/><path d="M0.6 6.8 L2.3 3.2 L3.2 2.8 L4.6 5.2 L5.8 3 L5.6 6.5 L6.8 7.5" fill="none" stroke="#000" stroke-width="0.95"/><circle cx="2.4" cy="3.6" r="0.75" fill="#1020c0"/><circle cx="5.7" cy="3.8" r="0.7" fill="#1020c0"/><path d="M5.2 1.6 L6.6 1.4" stroke="#000" stroke-width="1"/></svg>
<span class="tx" style="left:42.00px;top:174.24px;font-size:6.80px;transform:scaleX(0.785);color:#000;font-weight:normal;font-style:normal;">mc6_bot_groove3</span>
<svg class="a" style="left:24.60px;top:182.60px" width="4" height="5" viewBox="0 0 4 5"><path d="M0.5 0.5 L3.2 2.3 L0.5 4.1 Z" fill="#fff" stroke="#555" stroke-width="0.8"/></svg>
<div class="a" style="left:30.00px;top:185.00px;width:1.00px;height:1.00px;background:#9aa"></div>
<svg class="a" style="left:31.80px;top:180.70px" width="7.5" height="8" viewBox="0 0 7.5 8"><rect x="0" y="0.5" width="7" height="6.5" fill="#ffff10"/><path d="M0.6 6.8 L2.3 3.2 L3.2 2.8 L4.6 5.2 L5.8 3 L5.6 6.5 L6.8 7.5" fill="none" stroke="#000" stroke-width="0.95"/><circle cx="2.4" cy="3.6" r="0.75" fill="#1020c0"/><circle cx="5.7" cy="3.8" r="0.7" fill="#1020c0"/><path d="M5.2 1.6 L6.6 1.4" stroke="#000" stroke-width="1"/></svg>
<span class="tx" style="left:42.00px;top:182.24px;font-size:6.80px;transform:scaleX(0.785);color:#000;font-weight:normal;font-style:normal;">mc6_bot_groove4</span>
<svg class="a" style="left:24.60px;top:190.60px" width="4" height="5" viewBox="0 0 4 5"><path d="M0.5 0.5 L3.2 2.3 L0.5 4.1 Z" fill="#fff" stroke="#555" stroke-width="0.8"/></svg>
<div class="a" style="left:30.00px;top:193.00px;width:1.00px;height:1.00px;background:#9aa"></div>
<svg class="a" style="left:31.80px;top:188.70px" width="7.5" height="8" viewBox="0 0 7.5 8"><rect x="0" y="0.5" width="7" height="6.5" fill="#ffff10"/><path d="M0.6 6.8 L2.3 3.2 L3.2 2.8 L4.6 5.2 L5.8 3 L5.6 6.5 L6.8 7.5" fill="none" stroke="#000" stroke-width="0.95"/><circle cx="2.4" cy="3.6" r="0.75" fill="#1020c0"/><circle cx="5.7" cy="3.8" r="0.7" fill="#1020c0"/><path d="M5.2 1.6 L6.6 1.4" stroke="#000" stroke-width="1"/></svg>
<span class="tx" style="left:42.00px;top:190.24px;font-size:6.80px;transform:scaleX(0.785);color:#000;font-weight:normal;font-style:normal;">mc6_bot_tub</span>
<svg class="a" style="left:24.60px;top:198.60px" width="4" height="5" viewBox="0 0 4 5"><path d="M0.5 0.5 L3.2 2.3 L0.5 4.1 Z" fill="#fff" stroke="#555" stroke-width="0.8"/></svg>
<div class="a" style="left:30.00px;top:201.00px;width:1.00px;height:1.00px;background:#9aa"></div>
<svg class="a" style="left:31.80px;top:196.70px" width="7.5" height="8" viewBox="0 0 7.5 8"><rect x="0" y="0.5" width="7" height="6.5" fill="#ffff10"/><path d="M0.6 6.5 L2.2 3.5 L3.3 2.8 M4.5 4.6 L5.8 3 L6 1.6 L7 1.4" fill="none" stroke="#000" stroke-width="0.95"/><circle cx="2.3" cy="3.5" r="0.8" fill="#1020c0"/><circle cx="4.8" cy="4.8" r="0.8" fill="#1020c0"/><circle cx="6" cy="0.4" r="0.6" fill="#1020c0"/></svg>
<span class="tx" style="left:42.00px;top:198.24px;font-size:6.80px;transform:scaleX(0.785);color:#000;font-weight:normal;font-style:normal;">mc6_side</span>
<svg class="a" style="left:24.60px;top:206.60px" width="4" height="5" viewBox="0 0 4 5"><path d="M0.5 0.5 L3.2 2.3 L0.5 4.1 Z" fill="#fff" stroke="#555" stroke-width="0.8"/></svg>
<div class="a" style="left:30.00px;top:209.00px;width:1.00px;height:1.00px;background:#9aa"></div>
<svg class="a" style="left:31.80px;top:204.70px" width="7.5" height="8" viewBox="0 0 7.5 8"><rect x="0" y="0.5" width="7" height="6.5" fill="#ffff10"/><path d="M0.6 6.5 L2.2 3.5 L3.3 2.8 M4.5 4.6 L5.8 3 L6 1.6 L7 1.4" fill="none" stroke="#000" stroke-width="0.95"/><circle cx="2.3" cy="3.5" r="0.8" fill="#1020c0"/><circle cx="4.8" cy="4.8" r="0.8" fill="#1020c0"/><circle cx="6" cy="0.4" r="0.6" fill="#1020c0"/></svg>
<span class="tx" style="left:42.00px;top:206.24px;font-size:6.80px;transform:scaleX(0.785);color:#000;font-weight:normal;font-style:normal;">vl_1</span>
<svg class="a" style="left:24.60px;top:214.60px" width="4" height="5" viewBox="0 0 4 5"><path d="M0.5 0.5 L3.2 2.3 L0.5 4.1 Z" fill="#fff" stroke="#555" stroke-width="0.8"/></svg>
<div class="a" style="left:30.00px;top:217.00px;width:1.00px;height:1.00px;background:#9aa"></div>
<svg class="a" style="left:31.80px;top:212.70px" width="7.5" height="8" viewBox="0 0 7.5 8"><rect x="0" y="0.5" width="7" height="6.5" fill="#ffff10"/><path d="M0.6 6.8 L2.3 3.2 L3.2 2.8 L4.6 5.2 L5.8 3 L5.6 6.5 L6.8 7.5" fill="none" stroke="#000" stroke-width="0.95"/><circle cx="2.4" cy="3.6" r="0.75" fill="#1020c0"/><circle cx="5.7" cy="3.8" r="0.7" fill="#1020c0"/><path d="M5.2 1.6 L6.6 1.4" stroke="#000" stroke-width="1"/></svg>
<span class="tx" style="left:42.00px;top:214.24px;font-size:6.80px;transform:scaleX(0.785);color:#000;font-weight:normal;font-style:normal;">vl_2</span>
<svg class="a" style="left:24.60px;top:222.60px" width="4" height="5" viewBox="0 0 4 5"><path d="M0.5 0.5 L3.2 2.3 L0.5 4.1 Z" fill="#fff" stroke="#555" stroke-width="0.8"/></svg>
<div class="a" style="left:30.00px;top:225.00px;width:1.00px;height:1.00px;background:#9aa"></div>
<svg class="a" style="left:31.80px;top:220.70px" width="7.5" height="8" viewBox="0 0 7.5 8"><rect x="0" y="0.5" width="7" height="6.5" fill="#ffff10"/><path d="M0.6 6.8 L2.3 3.2 L3.2 2.8 L4.6 5.2 L5.8 3 L5.6 6.5 L6.8 7.5" fill="none" stroke="#000" stroke-width="0.95"/><circle cx="2.4" cy="3.6" r="0.75" fill="#1020c0"/><circle cx="5.7" cy="3.8" r="0.7" fill="#1020c0"/><path d="M5.2 1.6 L6.6 1.4" stroke="#000" stroke-width="1"/></svg>
<span class="tx" style="left:42.00px;top:222.24px;font-size:6.80px;transform:scaleX(0.785);color:#000;font-weight:normal;font-style:normal;">vl_3</span>
<svg class="a" style="left:24.60px;top:230.60px" width="4" height="5" viewBox="0 0 4 5"><path d="M0.5 0.5 L3.2 2.3 L0.5 4.1 Z" fill="#fff" stroke="#555" stroke-width="0.8"/></svg>
<div class="a" style="left:30.00px;top:233.00px;width:1.00px;height:1.00px;background:#9aa"></div>
<svg class="a" style="left:31.80px;top:228.70px" width="7.5" height="8" viewBox="0 0 7.5 8"><rect x="0" y="0.5" width="7" height="6.5" fill="#ffff10"/><path d="M0.6 6.8 L2.3 3.2 L3.2 2.8 L4.6 5.2 L5.8 3 L5.6 6.5 L6.8 7.5" fill="none" stroke="#000" stroke-width="0.95"/><circle cx="2.4" cy="3.6" r="0.75" fill="#1020c0"/><circle cx="5.7" cy="3.8" r="0.7" fill="#1020c0"/><path d="M5.2 1.6 L6.6 1.4" stroke="#000" stroke-width="1"/></svg>
<span class="tx" style="left:42.00px;top:230.24px;font-size:6.80px;transform:scaleX(0.785);color:#000;font-weight:normal;font-style:normal;">vl_4</span>
<div class="a" style="left:6.00px;top:233.00px;width:97.00px;height:2.00px;background:#f0f0f0"></div>
<div class="a" style="left:103.00px;top:68.50px;width:7.00px;height:164.50px;background:linear-gradient(90deg,#e6e6e6,#f2f2f2);border-left:1px solid #e0e0e0"></div>
<svg class="a" style="left:103.50px;top:71.50px" width="5" height="3" viewBox="0 0 5 3"><path d="M0.3 2.8 L2.5 0.3 L4.7 2.8 Z" fill="#222"/></svg>
<svg class="a" style="left:103.50px;top:227.50px" width="5" height="3" viewBox="0 0 5 3"><path d="M0.3 0.2 L2.5 2.7 L4.7 0.2 Z" fill="#222"/></svg>
<div class="a" style="left:102.00px;top:137.00px;width:7.50px;height:37.50px;border:1px solid #8f8f8f;border-radius:1.5px;background:linear-gradient(90deg,#f8f8f8,#e4e4e4 60%,#d4d4d4)"></div>
<svg class="a" style="left:104.00px;top:153.00px" width="4" height="5" viewBox="0 0 4 5"><path d="M0 0.5 H4 M0 2 H4 M0 3.5 H4" stroke="#777" stroke-width="0.7"/></svg>
<div class="a" style="left:0.00px;top:236.00px;width:113.00px;height:8.20px;background:linear-gradient(#dde7f2,#c6d5e6 25%,#bccbde)"></div>
<span class="tx" style="left:2.00px;top:237.55px;font-size:6.20px;transform:scaleX(0.922);color:#1c2838;font-weight:normal;font-style:normal;-webkit-text-stroke:0.2px #1c2838">Properties</span>
<svg class="a" style="left:104.50px;top:237.80px" width="6" height="5" viewBox="0 0 6 5"><path d="M0.7 0.7 L5.3 4.3 M5.3 0.7 L0.7 4.3" stroke="#111" stroke-width="1.4"/></svg>
<div class="a" style="left:0.00px;top:245.40px;width:113.00px;height:1.20px;background:#3b332c"></div>
<div class="a" style="left:0.00px;top:246.50px;width:113.00px;height:8.80px;background:linear-gradient(#fafafa,#ececec);border-bottom:1px solid #a0a0a0"></div>
<div class="a" style="left:1.00px;top:247.00px;width:102.00px;height:7.80px;background:#fff"></div>
<span class="tx" style="left:1.80px;top:247.33px;font-size:6.70px;transform:scaleX(0.979);color:#000;font-weight:bold;font-style:normal;-webkit-text-stroke:0.15px #000">C-spline Curve</span>
<div class="a" style="left:104.30px;top:247.60px;width:6.80px;height:7.40px;border-right:1px solid #333;border-bottom:1px solid #333;border-left:1px solid #fff;border-top:1px solid #fff;background:#f4f4f4"></div>
<svg class="a" style="left:105.00px;top:247.80px" width="5.5" height="7" viewBox="0 0 5.5 7"><path d="M1.2 2.2 Q1.2 0.6 2.8 0.6 Q4.4 0.6 4.4 2.2 Q4.4 3.2 2.8 3.8 V4.8" fill="none" stroke="#111" stroke-width="1.9"/><path d="M1.2 2.2 Q1.2 0.6 2.8 0.6 Q4.4 0.6 4.4 2.2 Q4.4 3.2 2.8 3.8 V4.8" fill="none" stroke="#ffe000" stroke-width="0.9"/><rect x="2.1" y="5.3" width="1.4" height="1.3" fill="#111"/></svg>
<div class="a" style="left:0.00px;top:255.00px;width:2.00px;height:145.00px;background:#8a8a8a"></div>
<div class="a" style="left:4.00px;top:255.00px;width:108.50px;height:130.35px;background:#fff"></div>
<div class="a" style="left:4.00px;top:262.79px;width:108.50px;height:0.80px;background:#d8d8d8"></div>
<span class="tx" style="left:5.50px;top:255.84px;font-size:6.80px;transform:scaleX(0.760);color:#000;font-weight:normal;font-style:normal;-webkit-text-stroke:0.3px #000">Name</span>
<span class="tx" style="left:51.00px;top:256.54px;font-size:6.80px;transform:scaleX(0.800);color:#000;font-weight:normal;font-style:normal;-webkit-text-stroke:0.3px #000">vl_groove_4</span>
<div class="a" style="left:4.00px;top:271.48px;width:108.50px;height:0.80px;background:#d8d8d8"></div>
<span class="tx" style="left:5.50px;top:264.53px;font-size:6.80px;transform:scaleX(0.760);color:#000;font-weight:normal;font-style:normal;-webkit-text-stroke:0.3px #000">Color</span>
<div class="a" style="left:51.00px;top:264.39px;width:6.80px;height:7.50px;background:#00e8f0;border:1px solid #303030;box-shadow:1px 0 0 #e06060"></div>
<span class="tx" style="left:59.00px;top:265.23px;font-size:6.80px;transform:scaleX(0.800);color:#000;font-weight:normal;font-style:normal;-webkit-text-stroke:0.3px #000">11</span>
<div class="a" style="left:4.00px;top:280.17px;width:108.50px;height:0.80px;background:#d8d8d8"></div>
<span class="tx" style="left:5.50px;top:273.22px;font-size:6.80px;transform:scaleX(0.760);color:#000;font-weight:normal;font-style:normal;-webkit-text-stroke:0.3px #000">Visible</span>
<div class="a" style="left:51.00px;top:273.28px;width:7.00px;height:7.00px;background:linear-gradient(135deg,#d8d8d8,#fafafa);border:1px solid #7a7a7a"></div>
<svg class="a" style="left:52.20px;top:274.28px" width="5" height="5" viewBox="0 0 5 5"><path d="M0.5 2.5 L2 4 L4.5 0.5" fill="none" stroke="#1a2a80" stroke-width="1.1"/></svg>
<span class="tx" style="left:59.00px;top:273.92px;font-size:6.80px;transform:scaleX(0.800);color:#000;font-weight:normal;font-style:normal;-webkit-text-stroke:0.3px #000">True</span>
<div class="a" style="left:4.00px;top:288.86px;width:108.50px;height:0.80px;background:#d8d8d8"></div>
<span class="tx" style="left:5.50px;top:281.91px;font-size:6.80px;transform:scaleX(0.760);color:#000;font-weight:normal;font-style:normal;-webkit-text-stroke:0.3px #000">Layer</span>
<svg class="a" style="left:51.00px;top:281.47px" width="6" height="8" viewBox="0 0 6 8"><circle cx="3" cy="3" r="2.5" fill="#ffe000" stroke="#222" stroke-width="0.9"/><rect x="2" y="5.5" width="2" height="2" fill="#333"/></svg>
<span class="tx" style="left:58.50px;top:282.61px;font-size:6.80px;transform:scaleX(0.800);color:#000;font-weight:normal;font-style:normal;-webkit-text-stroke:0.3px #000">0</span>
<div class="a" style="left:4.00px;top:297.55px;width:108.50px;height:0.80px;background:#d8d8d8"></div>
<span class="tx" style="left:5.50px;top:290.60px;font-size:6.80px;transform:scaleX(0.760);color:#000;font-weight:normal;font-style:normal;-webkit-text-stroke:0.3px #000">Lock</span>
<div class="a" style="left:51.00px;top:290.66px;width:7.00px;height:7.00px;background:linear-gradient(135deg,#d8d8d8,#fafafa);border:1px solid #7a7a7a"></div>
<span class="tx" style="left:59.00px;top:291.30px;font-size:6.80px;transform:scaleX(0.800);color:#000;font-weight:normal;font-style:normal;-webkit-text-stroke:0.3px #000">False</span>
<div class="a" style="left:4.00px;top:306.24px;width:108.50px;height:0.80px;background:#d8d8d8"></div>
<span class="tx" style="left:5.50px;top:299.29px;font-size:6.80px;transform:scaleX(0.760);color:#000;font-weight:normal;font-style:normal;-webkit-text-stroke:0.3px #000">Relabel</span>
<span class="tx" style="left:51.00px;top:299.99px;font-size:6.80px;transform:scaleX(0.800);color:#000;font-weight:normal;font-style:normal;-webkit-text-stroke:0.3px #000">*</span>
<div class="a" style="left:4.00px;top:314.93px;width:108.50px;height:0.80px;background:#d8d8d8"></div>
<span class="tx" style="left:5.50px;top:307.98px;font-size:6.80px;transform:scaleX(0.760);color:#000;font-weight:normal;font-style:normal;-webkit-text-stroke:0.3px #000">Degree</span>
<span class="tx" style="left:51.00px;top:308.68px;font-size:6.80px;transform:scaleX(0.800);color:#000;font-weight:normal;font-style:normal;-webkit-text-stroke:0.3px #000">Cubic</span>
<div class="a" style="left:4.00px;top:323.62px;width:108.50px;height:0.80px;background:#d8d8d8"></div>
<span class="tx" style="left:5.50px;top:316.67px;font-size:6.80px;transform:scaleX(0.760);color:#000;font-weight:normal;font-style:normal;-webkit-text-stroke:0.3px #000">Control points</span>
<span class="tx" style="left:51.00px;top:317.37px;font-size:6.80px;transform:scaleX(0.800);color:#000;font-weight:normal;font-style:normal;-webkit-text-stroke:0.3px #000">(6)</span>
<div class="a" style="left:4.00px;top:332.31px;width:108.50px;height:0.80px;background:#d8d8d8"></div>
<span class="tx" style="left:5.50px;top:325.36px;font-size:6.80px;transform:scaleX(0.760);color:#000;font-weight:normal;font-style:normal;-webkit-text-stroke:0.3px #000">Divisions</span>
<span class="tx" style="left:51.00px;top:326.06px;font-size:6.80px;transform:scaleX(0.800);color:#000;font-weight:normal;font-style:normal;-webkit-text-stroke:0.3px #000">8</span>
<div class="a" style="left:4.00px;top:341.00px;width:108.50px;height:0.80px;background:#d8d8d8"></div>
<span class="tx" style="left:5.50px;top:334.05px;font-size:6.80px;transform:scaleX(0.760);color:#000;font-weight:normal;font-style:normal;-webkit-text-stroke:0.3px #000">Subdivisions</span>
<span class="tx" style="left:51.00px;top:334.75px;font-size:6.80px;transform:scaleX(0.800);color:#000;font-weight:normal;font-style:normal;-webkit-text-stroke:0.3px #000">8</span>
<div class="a" style="left:4.00px;top:349.69px;width:108.50px;height:0.80px;background:#d8d8d8"></div>
<span class="tx" style="left:5.50px;top:342.74px;font-size:6.80px;transform:scaleX(0.760);color:#000;font-weight:normal;font-style:normal;-webkit-text-stroke:0.3px #000">Show tickmarks</span>
<div class="a" style="left:51.00px;top:342.80px;width:7.00px;height:7.00px;background:linear-gradient(135deg,#d8d8d8,#fafafa);border:1px solid #7a7a7a"></div>
<span class="tx" style="left:59.00px;top:343.44px;font-size:6.80px;transform:scaleX(0.800);color:#000;font-weight:normal;font-style:normal;-webkit-text-stroke:0.3px #000">False</span>
<div class="a" style="left:4.00px;top:358.38px;width:108.50px;height:0.80px;background:#d8d8d8"></div>
<span class="tx" style="left:5.50px;top:351.43px;font-size:6.80px;transform:scaleX(0.760);color:#000;font-weight:normal;font-style:normal;-webkit-text-stroke:0.3px #000">Show polyline</span>
<div class="a" style="left:51.00px;top:351.49px;width:7.00px;height:7.00px;background:linear-gradient(135deg,#d8d8d8,#fafafa);border:1px solid #7a7a7a"></div>
<span class="tx" style="left:59.00px;top:352.13px;font-size:6.80px;transform:scaleX(0.800);color:#000;font-weight:normal;font-style:normal;-webkit-text-stroke:0.3px #000">False</span>
<div class="a" style="left:4.00px;top:367.07px;width:108.50px;height:0.80px;background:#d8d8d8"></div>
<span class="tx" style="left:5.50px;top:360.12px;font-size:6.80px;transform:scaleX(0.760);color:#000;font-weight:normal;font-style:normal;-webkit-text-stroke:0.3px #000">Weight/unit length</span>
<span class="tx" style="left:51.00px;top:360.82px;font-size:6.80px;transform:scaleX(0.800);color:#000;font-weight:normal;font-style:normal;-webkit-text-stroke:0.3px #000">0.0000</span>
<div class="a" style="left:4.00px;top:375.76px;width:108.50px;height:0.80px;background:#d8d8d8"></div>
<span class="tx" style="left:5.50px;top:368.81px;font-size:6.80px;transform:scaleX(0.760);color:#000;font-weight:normal;font-style:normal;-webkit-text-stroke:0.3px #000">Symmetry exempt</span>
<div class="a" style="left:51.00px;top:368.87px;width:7.00px;height:7.00px;background:linear-gradient(135deg,#d8d8d8,#fafafa);border:1px solid #7a7a7a"></div>
<span class="tx" style="left:59.00px;top:369.51px;font-size:6.80px;transform:scaleX(0.800);color:#000;font-weight:normal;font-style:normal;-webkit-text-stroke:0.3px #000">False</span>
<div class="a" style="left:4.00px;top:384.45px;width:108.50px;height:0.80px;background:#d8d8d8"></div>
<span class="tx" style="left:5.50px;top:377.50px;font-size:6.80px;transform:scaleX(0.760);color:#000;font-weight:normal;font-style:normal;-webkit-text-stroke:0.3px #000">User data</span>
<div class="a" style="left:3.00px;top:385.50px;width:109.50px;height:14.00px;background:#ebebeb;border-top:1px solid #d0d0d0;border-bottom:1px solid #fff"></div>
<div class="a" style="left:47.50px;top:255.00px;width:0.80px;height:130.35px;background:#c8c8c8"></div>
<div class="a" style="left:49.00px;top:255.00px;width:0.80px;height:130.35px;background:#e8e8e8"></div>
<div class="a" style="left:0.00px;top:403.30px;width:113.00px;height:8.20px;background:linear-gradient(#dde7f2,#c6d5e6 25%,#bccbde)"></div>
<span class="tx" style="left:2.00px;top:404.85px;font-size:6.20px;transform:scaleX(0.905);color:#1c2838;font-weight:normal;font-style:normal;-webkit-text-stroke:0.2px #1c2838">Selection Set</span>
<svg class="a" style="left:104.50px;top:405.10px" width="6" height="5" viewBox="0 0 6 5"><path d="M0.7 0.7 L5.3 4.3 M5.3 0.7 L0.7 4.3" stroke="#111" stroke-width="1.4"/></svg>
<div class="a" style="left:0.00px;top:412.70px;width:113.00px;height:1.20px;background:#3b332c"></div>
<div class="a" style="left:5.00px;top:415.30px;width:9.50px;height:9.00px;border:1px solid #8a8a8a;background:linear-gradient(#fdfdfd,#e2e2e2);border-radius:1px"></div>
<div class="a" style="left:16.50px;top:415.30px;width:9.50px;height:9.00px;border:1px solid #8a8a8a;background:linear-gradient(#fdfdfd,#e2e2e2);border-radius:1px"></div>
<div class="a" style="left:28.70px;top:415.30px;width:9.50px;height:9.00px;border:1px solid #8a8a8a;background:linear-gradient(#fdfdfd,#e2e2e2);border-radius:1px"></div>
<div class="a" style="left:40.70px;top:415.30px;width:9.50px;height:9.00px;border:1px solid #8a8a8a;background:linear-gradient(#fdfdfd,#e2e2e2);border-radius:1px"></div>
<div class="a" style="left:52.70px;top:415.30px;width:9.50px;height:9.00px;border:1px solid #8a8a8a;background:linear-gradient(#fdfdfd,#e2e2e2);border-radius:1px"></div>
<svg class="a" style="left:5.00px;top:415.30px" width="62" height="10" viewBox="0 0 62 10"><path d="M2.5 2 h5 M2.5 7.5 h5 M3.3 2 v5.5 M5 2 v5.5 M6.6 2 v5.5" stroke="#222" stroke-width="0.9" fill="none"/><path d="M16.3 7.5 V2.5 M14.5 4.5 L16.3 2.3 L18 4.5" stroke="#222" stroke-width="1.1" fill="none"/><path d="M28.5 2.5 V7.5 M26.8 5.5 L28.5 7.7 L30.2 5.5" stroke="#222" stroke-width="1.1" fill="none"/><path d="M38 2.5 L43 7.3 M43 2.5 L38 7.3" stroke="#c02020" stroke-width="1.1" fill="none"/><rect x="48.8" y="1.3" width="7" height="7.2" fill="#f4f4ff" stroke="#3040b0" stroke-width="0.9"/><rect x="48.8" y="1.3" width="7" height="1.5" fill="#3040b0"/><path d="M50 3.5 L54.5 7.8 M54.5 3.5 L50 7.8" stroke="#d02020" stroke-width="1"/></svg>
<span class="tx" style="left:65.00px;top:416.57px;font-size:7.00px;transform:scaleX(0.771);color:#000;font-weight:normal;font-style:italic;-webkit-text-stroke:0.35px #000">1 Entity</span>
<div class="a" style="left:3.00px;top:426.50px;width:110.00px;height:88.00px;background:#fff;border-left:1px solid #c8c8c8;border-top:1px solid #c8c8c8"></div>
<div class="a" style="left:4.00px;top:427.50px;width:109.00px;height:11.00px;background:linear-gradient(#fdfdfd,#ededed);border-bottom:1px solid #d8d8d8"></div>
<div class="a" style="left:62.30px;top:427.50px;width:0.90px;height:11.00px;background:#d4d4d4"></div>
<div class="a" style="left:96.50px;top:427.50px;width:0.90px;height:11.00px;background:#d4d4d4"></div>
<div class="a" style="left:106.50px;top:427.50px;width:0.90px;height:11.00px;background:#d4d4d4"></div>
<span class="tx" style="left:6.00px;top:429.37px;font-size:7.00px;transform:scaleX(0.776);color:#000;font-weight:normal;font-style:normal;-webkit-text-stroke:0.4px #000">Name</span>
<span class="tx" style="left:65.00px;top:429.37px;font-size:7.00px;transform:scaleX(0.724);color:#000;font-weight:normal;font-style:normal;-webkit-text-stroke:0.4px #000">Type</span>
<span class="tx" style="left:98.30px;top:429.37px;font-size:7.00px;transform:scaleX(0.692);color:#000;font-weight:normal;font-style:normal;-webkit-text-stroke:0.4px #000">C..</span>
<span class="tx" style="left:15.30px;top:441.04px;font-size:6.80px;transform:scaleX(0.802);color:#000;font-weight:normal;font-style:normal;">vl_groove_4</span>
<span class="tx" style="left:66.50px;top:441.04px;font-size:6.80px;transform:scaleX(0.816);color:#000;font-weight:normal;font-style:normal;">C-spline ...</span>
<span class="tx" style="left:98.50px;top:441.04px;font-size:6.80px;transform:scaleX(0.633);color:#000;font-weight:normal;font-style:normal;">C..</span>
<div class="a" style="left:3.50px;top:505.50px;width:109.00px;height:8.50px;background:#ececec"></div>
<div class="a" style="left:10.00px;top:506.20px;width:93.00px;height:7.00px;border:1px solid #959595;border-radius:1.5px;background:linear-gradient(#f8f8f8,#e6e6e6 60%,#d6d6d6)"></div>
<svg class="a" style="left:54.00px;top:507.50px" width="5" height="4" viewBox="0 0 5 4"><path d="M0.5 0 V4 M2 0 V4 M3.5 0 V4" stroke="#777" stroke-width="0.7"/></svg>
<svg class="a" style="left:4.50px;top:507.80px" width="3" height="4" viewBox="0 0 3 4"><path d="M2.8 0.2 L0.2 2 L2.8 3.8 Z" fill="#222"/></svg>
<svg class="a" style="left:106.50px;top:507.80px" width="3" height="4" viewBox="0 0 3 4"><path d="M0.2 0.2 L2.8 2 L0.2 3.8 Z" fill="#222"/></svg>
<div class="a" style="left:0.00px;top:413.00px;width:2.30px;height:101.00px;background:#8a8a8a"></div>
<div class="a" style="left:112.50px;top:426.50px;width:0.80px;height:88.00px;background:#d0d0d0"></div>
<div class="a" style="left:116.00px;top:46.60px;width:580.00px;height:467.20px;background:#000"></div>
<div class="a" style="left:696.00px;top:46.60px;width:2.60px;height:467.20px;background:#1c1c1c"></div>
<div class="a" style="left:698.60px;top:46.00px;width:1.40px;height:469.00px;background:#f0f0f0"></div>
<svg class="a" style="left:0.00px;top:0.00px" width="700" height="525" viewBox="0 0 700 525"><rect x="118.30" y="400.50" width="1.4" height="1.0" fill="#a4a4a4"/><rect x="122.30" y="399.34" width="1.4" height="1.0" fill="#a4a4a4"/><rect x="126.30" y="398.18" width="1.4" height="1.0" fill="#a4a4a4"/><rect x="130.30" y="397.02" width="1.4" height="1.0" fill="#a4a4a4"/><rect x="134.30" y="395.87" width="1.4" height="1.0" fill="#a4a4a4"/><rect x="138.30" y="394.71" width="1.4" height="1.0" fill="#a4a4a4"/><rect x="142.30" y="393.55" width="1.4" height="1.0" fill="#a4a4a4"/><rect x="146.30" y="392.39" width="1.4" height="1.0" fill="#a4a4a4"/><rect x="150.30" y="391.23" width="1.4" height="1.0" fill="#a4a4a4"/><rect x="154.30" y="390.07" width="1.4" height="1.0" fill="#a4a4a4"/><rect x="158.30" y="388.92" width="1.4" height="1.0" fill="#a4a4a4"/><rect x="162.30" y="387.76" width="1.4" height="1.0" fill="#a4a4a4"/><rect x="166.30" y="386.60" width="1.4" height="1.0" fill="#a4a4a4"/><rect x="170.30" y="385.44" width="1.4" height="1.0" fill="#a4a4a4"/><rect x="174.30" y="384.28" width="1.4" height="1.0" fill="#a4a4a4"/><rect x="178.30" y="383.12" width="1.4" height="1.0" fill="#a4a4a4"/><rect x="182.30" y="381.97" width="1.4" height="1.0" fill="#a4a4a4"/><rect x="186.30" y="380.81" width="1.4" height="1.0" fill="#a4a4a4"/><rect x="190.30" y="379.65" width="1.4" height="1.0" fill="#a4a4a4"/><rect x="194.30" y="378.49" width="1.4" height="1.0" fill="#a4a4a4"/><rect x="198.30" y="377.33" width="1.4" height="1.0" fill="#a4a4a4"/><rect x="202.30" y="376.18" width="1.4" height="1.0" fill="#a4a4a4"/><rect x="206.30" y="375.02" width="1.4" height="1.0" fill="#a4a4a4"/><rect x="210.30" y="373.86" width="1.4" height="1.0" fill="#a4a4a4"/><rect x="214.30" y="372.70" width="1.4" height="1.0" fill="#a4a4a4"/><rect x="218.30" y="371.54" width="1.4" height="1.0" fill="#a4a4a4"/><rect x="222.30" y="370.38" width="1.4" height="1.0" fill="#a4a4a4"/><rect x="226.30" y="369.23" width="1.4" height="1.0" fill="#a4a4a4"/><rect x="230.30" y="368.07" width="1.4" height="1.0" fill="#a4a4a4"/><rect x="234.30" y="366.91" width="1.4" height="1.0" fill="#a4a4a4"/><rect x="238.30" y="365.75" width="1.4" height="1.0" fill="#a4a4a4"/><rect x="242.30" y="364.59" width="1.4" height="1.0" fill="#a4a4a4"/><rect x="246.30" y="363.43" width="1.4" height="1.0" fill="#a4a4a4"/><rect x="250.30" y="362.27" width="1.4" height="1.0" fill="#a4a4a4"/><rect x="254.30" y="361.12" width="1.4" height="1.0" fill="#a4a4a4"/><rect x="258.30" y="359.96" width="1.4" height="1.0" fill="#a4a4a4"/><rect x="262.30" y="358.80" width="1.4" height="1.0" fill="#a4a4a4"/><rect x="266.30" y="357.64" width="1.4" height="1.0" fill="#a4a4a4"/><rect x="270.30" y="356.48" width="1.4" height="1.0" fill="#a4a4a4"/><rect x="274.30" y="355.32" width="1.4" height="1.0" fill="#a4a4a4"/><rect x="278.30" y="354.17" width="1.4" height="1.0" fill="#a4a4a4"/><rect x="282.30" y="353.01" width="1.4" height="1.0" fill="#a4a4a4"/><rect x="286.30" y="351.85" width="1.4" height="1.0" fill="#a4a4a4"/><rect x="290.30" y="350.69" width="1.4" height="1.0" fill="#a4a4a4"/><rect x="294.30" y="349.53" width="1.4" height="1.0" fill="#a4a4a4"/><rect x="298.30" y="348.38" width="1.4" height="1.0" fill="#a4a4a4"/><rect x="302.30" y="347.22" width="1.4" height="1.0" fill="#a4a4a4"/><rect x="306.30" y="346.06" width="1.4" height="1.0" fill="#a4a4a4"/><rect x="310.30" y="344.90" width="1.4" height="1.0" fill="#a4a4a4"/><rect x="314.30" y="343.74" width="1.4" height="1.0" fill="#a4a4a4"/><rect x="318.30" y="342.58" width="1.4" height="1.0" fill="#a4a4a4"/><rect x="322.30" y="341.43" width="1.4" height="1.0" fill="#a4a4a4"/><rect x="326.30" y="340.27" width="1.4" height="1.0" fill="#a4a4a4"/><rect x="330.30" y="339.11" width="1.4" height="1.0" fill="#a4a4a4"/><rect x="334.30" y="337.95" width="1.4" height="1.0" fill="#a4a4a4"/><rect x="338.30" y="336.79" width="1.4" height="1.0" fill="#a4a4a4"/><rect x="342.30" y="335.63" width="1.4" height="1.0" fill="#a4a4a4"/><rect x="346.30" y="334.48" width="1.4" height="1.0" fill="#a4a4a4"/><rect x="350.30" y="333.32" width="1.4" height="1.0" fill="#a4a4a4"/><rect x="354.30" y="332.16" width="1.4" height="1.0" fill="#a4a4a4"/><rect x="358.30" y="331.00" width="1.4" height="1.0" fill="#a4a4a4"/><rect x="362.30" y="329.84" width="1.4" height="1.0" fill="#a4a4a4"/><rect x="366.30" y="328.68" width="1.4" height="1.0" fill="#a4a4a4"/><rect x="370.30" y="327.52" width="1.4" height="1.0" fill="#a4a4a4"/><rect x="374.30" y="326.37" width="1.4" height="1.0" fill="#a4a4a4"/><rect x="378.30" y="325.21" width="1.4" height="1.0" fill="#a4a4a4"/><rect x="382.30" y="324.05" width="1.4" height="1.0" fill="#a4a4a4"/><rect x="386.30" y="322.89" width="1.4" height="1.0" fill="#a4a4a4"/><rect x="390.30" y="321.73" width="1.4" height="1.0" fill="#a4a4a4"/><rect x="394.30" y="320.57" width="1.4" height="1.0" fill="#a4a4a4"/><rect x="398.30" y="319.42" width="1.4" height="1.0" fill="#a4a4a4"/><rect x="402.30" y="318.26" width="1.4" height="1.0" fill="#a4a4a4"/><rect x="406.30" y="317.10" width="1.4" height="1.0" fill="#a4a4a4"/><rect x="410.30" y="315.94" width="1.4" height="1.0" fill="#a4a4a4"/><rect x="414.30" y="314.78" width="1.4" height="1.0" fill="#a4a4a4"/><rect x="418.30" y="313.62" width="1.4" height="1.0" fill="#a4a4a4"/><rect x="422.30" y="312.47" width="1.4" height="1.0" fill="#a4a4a4"/><rect x="426.30" y="311.31" width="1.4" height="1.0" fill="#a4a4a4"/><rect x="430.30" y="310.15" width="1.4" height="1.0" fill="#a4a4a4"/><rect x="434.30" y="308.99" width="1.4" height="1.0" fill="#a4a4a4"/><rect x="438.30" y="307.83" width="1.4" height="1.0" fill="#a4a4a4"/><rect x="442.30" y="306.68" width="1.4" height="1.0" fill="#a4a4a4"/><rect x="446.30" y="305.52" width="1.4" height="1.0" fill="#a4a4a4"/><rect x="450.30" y="304.36" width="1.4" height="1.0" fill="#a4a4a4"/><rect x="454.30" y="303.20" width="1.4" height="1.0" fill="#a4a4a4"/><rect x="458.30" y="302.04" width="1.4" height="1.0" fill="#a4a4a4"/><rect x="462.30" y="300.88" width="1.4" height="1.0" fill="#a4a4a4"/><rect x="466.30" y="299.73" width="1.4" height="1.0" fill="#a4a4a4"/><rect x="470.30" y="298.57" width="1.4" height="1.0" fill="#a4a4a4"/><rect x="474.30" y="297.41" width="1.4" height="1.0" fill="#a4a4a4"/><rect x="478.30" y="296.25" width="1.4" height="1.0" fill="#a4a4a4"/><rect x="482.30" y="295.09" width="1.4" height="1.0" fill="#a4a4a4"/><rect x="486.30" y="293.93" width="1.4" height="1.0" fill="#a4a4a4"/><rect x="490.30" y="292.77" width="1.4" height="1.0" fill="#a4a4a4"/><rect x="494.30" y="291.62" width="1.4" height="1.0" fill="#a4a4a4"/><rect x="498.30" y="290.46" width="1.4" height="1.0" fill="#a4a4a4"/><rect x="502.30" y="289.30" width="1.4" height="1.0" fill="#a4a4a4"/><rect x="506.30" y="288.14" width="1.4" height="1.0" fill="#a4a4a4"/><rect x="510.30" y="286.98" width="1.4" height="1.0" fill="#a4a4a4"/><rect x="514.30" y="285.82" width="1.4" height="1.0" fill="#a4a4a4"/><rect x="518.30" y="284.67" width="1.4" height="1.0" fill="#a4a4a4"/><rect x="522.30" y="283.51" width="1.4" height="1.0" fill="#a4a4a4"/><rect x="526.30" y="282.35" width="1.4" height="1.0" fill="#a4a4a4"/><rect x="530.30" y="281.19" width="1.4" height="1.0" fill="#a4a4a4"/><rect x="534.30" y="280.03" width="1.4" height="1.0" fill="#a4a4a4"/><rect x="538.30" y="278.88" width="1.4" height="1.0" fill="#a4a4a4"/><rect x="542.30" y="277.72" width="1.4" height="1.0" fill="#a4a4a4"/><rect x="546.30" y="276.56" width="1.4" height="1.0" fill="#a4a4a4"/><rect x="550.30" y="275.40" width="1.4" height="1.0" fill="#a4a4a4"/><rect x="554.30" y="274.24" width="1.4" height="1.0" fill="#a4a4a4"/><rect x="558.30" y="273.08" width="1.4" height="1.0" fill="#a4a4a4"/><rect x="562.30" y="271.92" width="1.4" height="1.0" fill="#a4a4a4"/><rect x="566.30" y="270.77" width="1.4" height="1.0" fill="#a4a4a4"/><rect x="570.30" y="269.61" width="1.4" height="1.0" fill="#a4a4a4"/><rect x="574.30" y="268.45" width="1.4" height="1.0" fill="#a4a4a4"/><rect x="578.30" y="267.29" width="1.4" height="1.0" fill="#a4a4a4"/><rect x="582.30" y="266.13" width="1.4" height="1.0" fill="#a4a4a4"/><rect x="586.30" y="264.98" width="1.4" height="1.0" fill="#a4a4a4"/><rect x="590.30" y="263.82" width="1.4" height="1.0" fill="#a4a4a4"/><rect x="594.30" y="262.66" width="1.4" height="1.0" fill="#a4a4a4"/><rect x="598.30" y="261.50" width="1.4" height="1.0" fill="#a4a4a4"/><rect x="602.30" y="260.34" width="1.4" height="1.0" fill="#a4a4a4"/><rect x="606.30" y="259.18" width="1.4" height="1.0" fill="#a4a4a4"/><rect x="610.30" y="258.02" width="1.4" height="1.0" fill="#a4a4a4"/><rect x="614.30" y="256.87" width="1.4" height="1.0" fill="#a4a4a4"/><rect x="618.30" y="255.71" width="1.4" height="1.0" fill="#a4a4a4"/><rect x="622.30" y="254.55" width="1.4" height="1.0" fill="#a4a4a4"/><rect x="626.30" y="253.39" width="1.4" height="1.0" fill="#a4a4a4"/><rect x="630.30" y="252.23" width="1.4" height="1.0" fill="#a4a4a4"/><rect x="634.30" y="251.07" width="1.4" height="1.0" fill="#a4a4a4"/><rect x="638.30" y="249.92" width="1.4" height="1.0" fill="#a4a4a4"/><rect x="642.30" y="248.76" width="1.4" height="1.0" fill="#a4a4a4"/><rect x="646.30" y="247.60" width="1.4" height="1.0" fill="#a4a4a4"/><rect x="650.30" y="246.44" width="1.4" height="1.0" fill="#a4a4a4"/><rect x="654.30" y="245.28" width="1.4" height="1.0" fill="#a4a4a4"/><rect x="658.30" y="244.12" width="1.4" height="1.0" fill="#a4a4a4"/><rect x="662.30" y="242.97" width="1.4" height="1.0" fill="#a4a4a4"/><rect x="666.30" y="241.81" width="1.4" height="1.0" fill="#a4a4a4"/><rect x="670.30" y="240.65" width="1.4" height="1.0" fill="#a4a4a4"/><rect x="674.30" y="239.49" width="1.4" height="1.0" fill="#a4a4a4"/><rect x="678.30" y="238.33" width="1.4" height="1.0" fill="#a4a4a4"/><rect x="682.30" y="237.17" width="1.4" height="1.0" fill="#a4a4a4"/><rect x="686.30" y="236.02" width="1.4" height="1.0" fill="#a4a4a4"/><rect x="690.30" y="234.86" width="1.4" height="1.0" fill="#a4a4a4"/><rect x="694.30" y="233.70" width="1.4" height="1.0" fill="#a4a4a4"/><rect x="574.30" y="147.00" width="1.4" height="1.0" fill="#a4a4a4"/><rect x="578.30" y="150.45" width="1.4" height="1.0" fill="#a4a4a4"/><rect x="582.30" y="153.90" width="1.4" height="1.0" fill="#a4a4a4"/><rect x="586.30" y="157.35" width="1.4" height="1.0" fill="#a4a4a4"/><rect x="590.30" y="160.80" width="1.4" height="1.0" fill="#a4a4a4"/><rect x="594.30" y="164.25" width="1.4" height="1.0" fill="#a4a4a4"/><rect x="598.30" y="167.70" width="1.4" height="1.0" fill="#a4a4a4"/><rect x="602.30" y="171.15" width="1.4" height="1.0" fill="#a4a4a4"/><rect x="606.30" y="174.60" width="1.4" height="1.0" fill="#a4a4a4"/><rect x="610.30" y="178.05" width="1.4" height="1.0" fill="#a4a4a4"/><rect x="614.30" y="181.50" width="1.4" height="1.0" fill="#a4a4a4"/><rect x="618.30" y="184.95" width="1.4" height="1.0" fill="#a4a4a4"/><rect x="622.30" y="188.40" width="1.4" height="1.0" fill="#a4a4a4"/><rect x="626.30" y="191.85" width="1.4" height="1.0" fill="#a4a4a4"/><rect x="630.30" y="195.30" width="1.4" height="1.0" fill="#a4a4a4"/><rect x="634.30" y="198.75" width="1.4" height="1.0" fill="#a4a4a4"/><rect x="638.30" y="202.20" width="1.4" height="1.0" fill="#a4a4a4"/><rect x="642.30" y="205.65" width="1.4" height="1.0" fill="#a4a4a4"/><rect x="646.30" y="209.10" width="1.4" height="1.0" fill="#a4a4a4"/><rect x="650.30" y="212.55" width="1.4" height="1.0" fill="#a4a4a4"/><rect x="654.30" y="216.00" width="1.4" height="1.0" fill="#a4a4a4"/><rect x="658.30" y="219.45" width="1.4" height="1.0" fill="#a4a4a4"/><rect x="662.30" y="222.90" width="1.4" height="1.0" fill="#a4a4a4"/><rect x="666.30" y="226.35" width="1.4" height="1.0" fill="#a4a4a4"/><rect x="670.30" y="229.80" width="1.4" height="1.0" fill="#a4a4a4"/><rect x="674.30" y="233.25" width="1.4" height="1.0" fill="#a4a4a4"/><rect x="678.30" y="236.70" width="1.4" height="1.0" fill="#a4a4a4"/><rect x="682.30" y="240.15" width="1.4" height="1.0" fill="#a4a4a4"/><rect x="686.30" y="243.60" width="1.4" height="1.0" fill="#a4a4a4"/><rect x="690.30" y="247.05" width="1.4" height="1.0" fill="#a4a4a4"/><rect x="694.30" y="250.50" width="1.4" height="1.0" fill="#a4a4a4"/><rect x="680" y="59" width="2" height="1" fill="#8c8c8c"/><rect x="680" y="63" width="2" height="1" fill="#8c8c8c"/><rect x="680" y="67" width="2" height="1" fill="#8c8c8c"/><rect x="680" y="71" width="2" height="1" fill="#8c8c8c"/><rect x="680" y="75" width="2" height="1" fill="#8c8c8c"/><rect x="680" y="79" width="2" height="1" fill="#8c8c8c"/><rect x="680" y="83" width="2" height="1" fill="#8c8c8c"/><rect x="680" y="87" width="2" height="1" fill="#8c8c8c"/><rect x="680" y="91" width="2" height="1" fill="#8c8c8c"/><rect x="680" y="95" width="2" height="1" fill="#8c8c8c"/><rect x="680" y="99" width="2" height="1" fill="#8c8c8c"/><rect x="680" y="103" width="2" height="1" fill="#8c8c8c"/><rect x="680" y="107" width="2" height="1" fill="#8c8c8c"/><rect x="680" y="111" width="2" height="1" fill="#8c8c8c"/><rect x="680" y="115" width="2" height="1" fill="#8c8c8c"/><rect x="680" y="119" width="2" height="1" fill="#8c8c8c"/><rect x="680" y="123" width="2" height="1" fill="#8c8c8c"/><rect x="680" y="127" width="2" height="1" fill="#8c8c8c"/><rect x="680" y="131" width="2" height="1" fill="#8c8c8c"/><rect x="680" y="135" width="2" height="1" fill="#8c8c8c"/><rect x="680" y="139" width="2" height="1" fill="#8c8c8c"/><rect x="680" y="143" width="2" height="1" fill="#8c8c8c"/><rect x="680" y="147" width="2" height="1" fill="#8c8c8c"/><rect x="680" y="151" width="2" height="1" fill="#8c8c8c"/><rect x="680" y="155" width="2" height="1" fill="#8c8c8c"/><rect x="680" y="159" width="2" height="1" fill="#8c8c8c"/><rect x="680" y="163" width="2" height="1" fill="#8c8c8c"/><rect x="680" y="167" width="2" height="1" fill="#8c8c8c"/><rect x="680" y="171" width="2" height="1" fill="#8c8c8c"/><rect x="680" y="175" width="2" height="1" fill="#8c8c8c"/><rect x="680" y="179" width="2" height="1" fill="#8c8c8c"/><rect x="680" y="183" width="2" height="1" fill="#8c8c8c"/><rect x="680" y="187" width="2" height="1" fill="#8c8c8c"/><rect x="680" y="191" width="2" height="1" fill="#8c8c8c"/><rect x="680" y="195" width="2" height="1" fill="#8c8c8c"/><rect x="680" y="199" width="2" height="1" fill="#8c8c8c"/><rect x="680" y="203" width="2" height="1" fill="#8c8c8c"/><rect x="680" y="207" width="2" height="1" fill="#8c8c8c"/><rect x="680" y="211" width="2" height="1" fill="#8c8c8c"/><rect x="680" y="215" width="2" height="1" fill="#8c8c8c"/><rect x="680" y="219" width="2" height="1" fill="#8c8c8c"/><rect x="680" y="223" width="2" height="1" fill="#8c8c8c"/><rect x="680" y="227" width="2" height="1" fill="#8c8c8c"/><rect x="680" y="231" width="2" height="1" fill="#8c8c8c"/><rect x="680" y="235" width="2" height="1" fill="#8c8c8c"/><rect x="680" y="239" width="2" height="1" fill="#8c8c8c"/><rect x="680" y="243" width="2" height="1" fill="#8c8c8c"/><rect x="680" y="247" width="2" height="1" fill="#8c8c8c"/><rect x="680" y="251" width="2" height="1" fill="#8c8c8c"/><rect x="680" y="255" width="2" height="1" fill="#8c8c8c"/><rect x="680" y="259" width="2" height="1" fill="#8c8c8c"/><rect x="680" y="263" width="2" height="1" fill="#8c8c8c"/><rect x="680" y="267" width="2" height="1" fill="#8c8c8c"/><rect x="680" y="271" width="2" height="1" fill="#8c8c8c"/><rect x="680" y="275" width="2" height="1" fill="#8c8c8c"/><rect x="680" y="279" width="2" height="1" fill="#8c8c8c"/><rect x="680" y="283" width="2" height="1" fill="#8c8c8c"/><rect x="680" y="287" width="2" height="1" fill="#8c8c8c"/><rect x="680" y="291" width="2" height="1" fill="#8c8c8c"/><rect x="680" y="295" width="2" height="1" fill="#8c8c8c"/><rect x="680" y="299" width="2" height="1" fill="#8c8c8c"/><rect x="680" y="303" width="2" height="1" fill="#8c8c8c"/><rect x="680" y="307" width="2" height="1" fill="#8c8c8c"/><rect x="680" y="311" width="2" height="1" fill="#8c8c8c"/><rect x="680" y="315" width="2" height="1" fill="#8c8c8c"/><rect x="680" y="319" width="2" height="1" fill="#8c8c8c"/><rect x="680" y="323" width="2" height="1" fill="#8c8c8c"/><rect x="680" y="327" width="2" height="1" fill="#8c8c8c"/><rect x="680" y="331" width="2" height="1" fill="#8c8c8c"/><rect x="680" y="335" width="2" height="1" fill="#8c8c8c"/><rect x="680" y="339" width="2" height="1" fill="#8c8c8c"/><rect x="680" y="343" width="2" height="1" fill="#8c8c8c"/><rect x="680" y="347" width="2" height="1" fill="#8c8c8c"/><rect x="680" y="351" width="2" height="1" fill="#8c8c8c"/><rect x="680" y="355" width="2" height="1" fill="#8c8c8c"/><rect x="680" y="359" width="2" height="1" fill="#8c8c8c"/><rect x="680" y="363" width="2" height="1" fill="#8c8c8c"/><rect x="680" y="367" width="2" height="1" fill="#8c8c8c"/><rect x="680" y="371" width="2" height="1" fill="#8c8c8c"/><g fill="none" stroke="#00f0fa" stroke-width="1.15"><path d="M647.8 157.2 L650.7 190.6 L675.1 225.9 L680.7 234.4"/><path d="M141.30 331.30 C142.47 329.20 144.90 323.13 148.30 318.70 C151.70 314.27 157.70 308.37 161.70 304.70 C165.70 301.03 167.70 299.87 172.30 296.70 C176.90 293.53 182.90 289.20 189.30 285.70 C195.70 282.20 203.57 278.92 210.70 275.70 C217.83 272.48 224.95 269.25 232.10 266.40 C239.25 263.55 246.45 260.90 253.60 258.60 C260.75 256.30 263.93 255.80 275.00 252.60 C286.07 249.40 305.83 243.33 320.00 239.40 C334.17 235.47 346.67 232.50 360.00 229.00 C373.33 225.50 380.00 223.67 400.00 218.40 C420.00 213.13 460.00 202.48 480.00 197.40 C500.00 192.32 500.00 192.77 520.00 187.90 C540.00 183.03 580.00 172.97 600.00 168.20 C620.00 163.43 632.03 161.13 640.00 159.30 C647.97 157.47 646.50 157.55 647.80 157.20"/><path d="M151.00 338.00 C152.78 335.55 157.70 327.18 161.70 323.30 C165.70 319.42 170.12 317.25 175.00 314.70 C179.88 312.15 186.00 309.67 191.00 308.00 C196.00 306.33 199.33 306.15 205.00 304.70 C210.67 303.25 213.33 301.40 225.00 299.30 C236.67 297.20 259.17 294.52 275.00 292.10 C290.83 289.68 305.83 287.25 320.00 284.80 C334.17 282.35 346.67 280.30 360.00 277.40 C373.33 274.50 386.67 270.75 400.00 267.40 C413.33 264.05 426.67 260.82 440.00 257.30 C453.33 253.78 466.67 250.20 480.00 246.30 C493.33 242.40 506.67 238.08 520.00 233.90 C533.33 229.72 546.67 225.47 560.00 221.20 C573.33 216.93 584.88 213.40 600.00 208.30 C615.12 203.20 642.25 193.55 650.70 190.60"/><path d="M141.30 331.30 C142.92 332.42 146.50 335.33 151.00 338.00 C155.50 340.67 162.47 344.22 168.30 347.30 C174.13 350.38 183.05 354.97 186.00 356.50"/><path d="M189.90 358.60 C191.58 359.02 193.92 360.82 200.00 361.10 C206.08 361.38 217.23 360.92 226.40 360.30 C235.57 359.68 243.92 359.12 255.00 357.40 C266.08 355.68 268.73 356.23 292.90 350.00 C317.07 343.77 357.15 332.23 400.00 320.00 C442.85 307.77 516.67 286.60 550.00 276.60 C583.33 266.60 578.27 267.10 600.00 260.00 C621.73 252.90 667.00 238.33 680.40 234.00"/><path d="M303.70 287.70 C307.37 294.42 321.15 319.62 325.70 328.00 C330.25 336.38 330.12 336.33 331.00 338.00"/><path d="M392.00 270.00 C395.62 275.72 409.37 297.30 413.70 304.30 C418.03 311.30 417.28 310.72 418.00 312.00"/><path d="M512.30 236.60 C516.20 242.17 531.08 263.27 535.70 270.00 C540.32 276.73 539.28 275.83 540.00 277.00"/><path d="M205 304.3 Q212 335 241.7 357.7"/></g><path d="M189.00 357.00 C196.18 355.83 221.10 352.02 232.10 350.00 C243.10 347.98 239.40 348.57 255.00 344.90 C270.60 341.23 301.53 334.12 325.70 328.00 C349.87 321.88 362.62 318.68 400.00 308.20 C437.38 297.72 516.67 274.58 550.00 265.10 C583.33 255.62 579.15 257.83 600.00 251.30 C620.85 244.77 662.58 230.13 675.10 225.90" fill="none" stroke="#00f0fa" stroke-width="1.8"/><circle cx="187" cy="357.2" r="2.4" fill="#101040" stroke="#ffe8ff" stroke-width="1.25"/><text x="187.0" y="364.3" font-family="Liberation Sans" font-size="7" fill="#00ff00" textLength="11.8" lengthAdjust="spacingAndGlyphs">E14</text><text x="232.7" y="357.4" font-family="Liberation Sans" font-size="7" fill="#00ff00" textLength="11.8" lengthAdjust="spacingAndGlyphs">e24</text><text x="325.7" y="335.0" font-family="Liberation Sans" font-size="7" fill="#00ff00" textLength="11.8" lengthAdjust="spacingAndGlyphs">e34</text><text x="413.7" y="312.0" font-family="Liberation Sans" font-size="7" fill="#00ff00" textLength="11.8" lengthAdjust="spacingAndGlyphs">e44</text><text x="535.7" y="276.6" font-family="Liberation Sans" font-size="7" fill="#00ff00" textLength="11.8" lengthAdjust="spacingAndGlyphs">c54</text><text x="675.5" y="232.7" font-family="Liberation Sans" font-size="7" fill="#00ff00" textLength="11.8" lengthAdjust="spacingAndGlyphs">c64</text><path d="M567.5 142.5 L570 145.5 L572.5 142.5 M570 145.5 V148" stroke="#fff" stroke-width="1.1" fill="none"/><path d="M681 49.3 H685 L681 54 H685" stroke="#fff" stroke-width="1.1" fill="none"/><path d="M117.5 403.5 L121 408 M121 403.5 L117.5 408" stroke="#fff" stroke-width="1" fill="none"/><path d="M470 285.8 L477 287.6 L470.5 290.6 L472.5 288 Z" fill="#fff"/></svg>
<div class="a" style="left:0.00px;top:513.80px;width:700.00px;height:11.20px;background:#f0f0f0"></div>
<div class="a" style="left:116.00px;top:513.80px;width:584.00px;height:2.20px;background:#fff"></div>
<div class="a" style="left:0.00px;top:516.10px;width:700.00px;height:0.80px;background:#d8d8d8"></div>
<div class="a" style="left:0.00px;top:521.00px;width:700.00px;height:0.80px;background:#d4d4d4"></div>
<div class="a" style="left:0.00px;top:521.80px;width:700.00px;height:1.10px;background:#fff"></div>
<span class="tx" style="left:2.00px;top:516.12px;font-size:7.30px;transform:scaleX(0.769);color:#000;font-weight:normal;font-style:normal;-webkit-text-stroke:0.4px #000">For Help, press F1.</span>
<div class="a" style="left:0.00px;top:522.90px;width:700.00px;height:2.10px;background:linear-gradient(#858585,#a0a4aa)"></div>
<div class="a" style="left:180.00px;top:515.80px;width:156.50px;height:8.00px;border-left:1px solid #a0a0a0;border-top:1px solid #a8a8a8;border-right:1px solid #fff;background:#ececec"></div>
<div class="a" style="left:337.00px;top:515.80px;width:137.90px;height:8.00px;border-left:1px solid #a0a0a0;border-top:1px solid #a8a8a8;border-right:1px solid #fff;background:#ececec"></div>
<div class="a" style="left:475.40px;top:515.80px;width:47.60px;height:8.00px;border-left:1px solid #a0a0a0;border-top:1px solid #a8a8a8;border-right:1px solid #fff;background:#ececec"></div>
<div class="a" style="left:523.50px;top:515.80px;width:37.50px;height:8.00px;border-left:1px solid #a0a0a0;border-top:1px solid #a8a8a8;border-right:1px solid #fff;background:#ececec"></div>
<div class="a" style="left:561.50px;top:515.80px;width:36.80px;height:8.00px;border-left:1px solid #a0a0a0;border-top:1px solid #a8a8a8;border-right:1px solid #fff;background:#ececec"></div>
<div class="a" style="left:598.80px;top:515.80px;width:55.20px;height:8.00px;border-left:1px solid #a0a0a0;border-top:1px solid #a8a8a8;border-right:1px solid #fff;background:#ececec"></div>
<div class="a" style="left:654.50px;top:515.80px;width:38.00px;height:8.00px;border-left:1px solid #a0a0a0;border-top:1px solid #a8a8a8;border-right:1px solid #fff;background:#ececec"></div>
<div class="a" style="left:337.50px;top:516.80px;width:8.50px;height:6.20px;background:#fff"></div>
<span class="tx" style="left:338.50px;top:517.07px;font-size:7.00px;transform:scaleX(0.834);color:#000;font-weight:normal;font-style:normal;-webkit-text-stroke:0.35px #000">L0</span>
<div class="a" style="left:524.00px;top:516.80px;width:27.00px;height:6.20px;background:#fff"></div>
<span class="tx" style="left:525.00px;top:517.07px;font-size:7.00px;transform:scaleX(0.904);color:#000;font-weight:normal;font-style:normal;-webkit-text-stroke:0.35px #000">Lat -30.0</span>
<div class="a" style="left:561.00px;top:516.80px;width:25.00px;height:6.20px;background:#fff"></div>
<span class="tx" style="left:562.00px;top:517.07px;font-size:7.00px;transform:scaleX(0.844);color:#000;font-weight:normal;font-style:normal;-webkit-text-stroke:0.35px #000">Lon 60.0</span>
<div class="a" style="left:600.00px;top:516.80px;width:31.00px;height:6.20px;background:#fff"></div>
<span class="tx" style="left:601.00px;top:517.07px;font-size:7.00px;transform:scaleX(0.776);color:#000;font-weight:normal;font-style:normal;-webkit-text-stroke:0.35px #000">Radius 12.5</span>
<div class="a" style="left:654.00px;top:516.80px;width:19.00px;height:6.20px;background:#fff"></div>
<span class="tx" style="left:655.00px;top:517.07px;font-size:7.00px;transform:scaleX(0.819);color:#000;font-weight:normal;font-style:normal;-webkit-text-stroke:0.35px #000">Tilt 0.0</span>
</body></html>
